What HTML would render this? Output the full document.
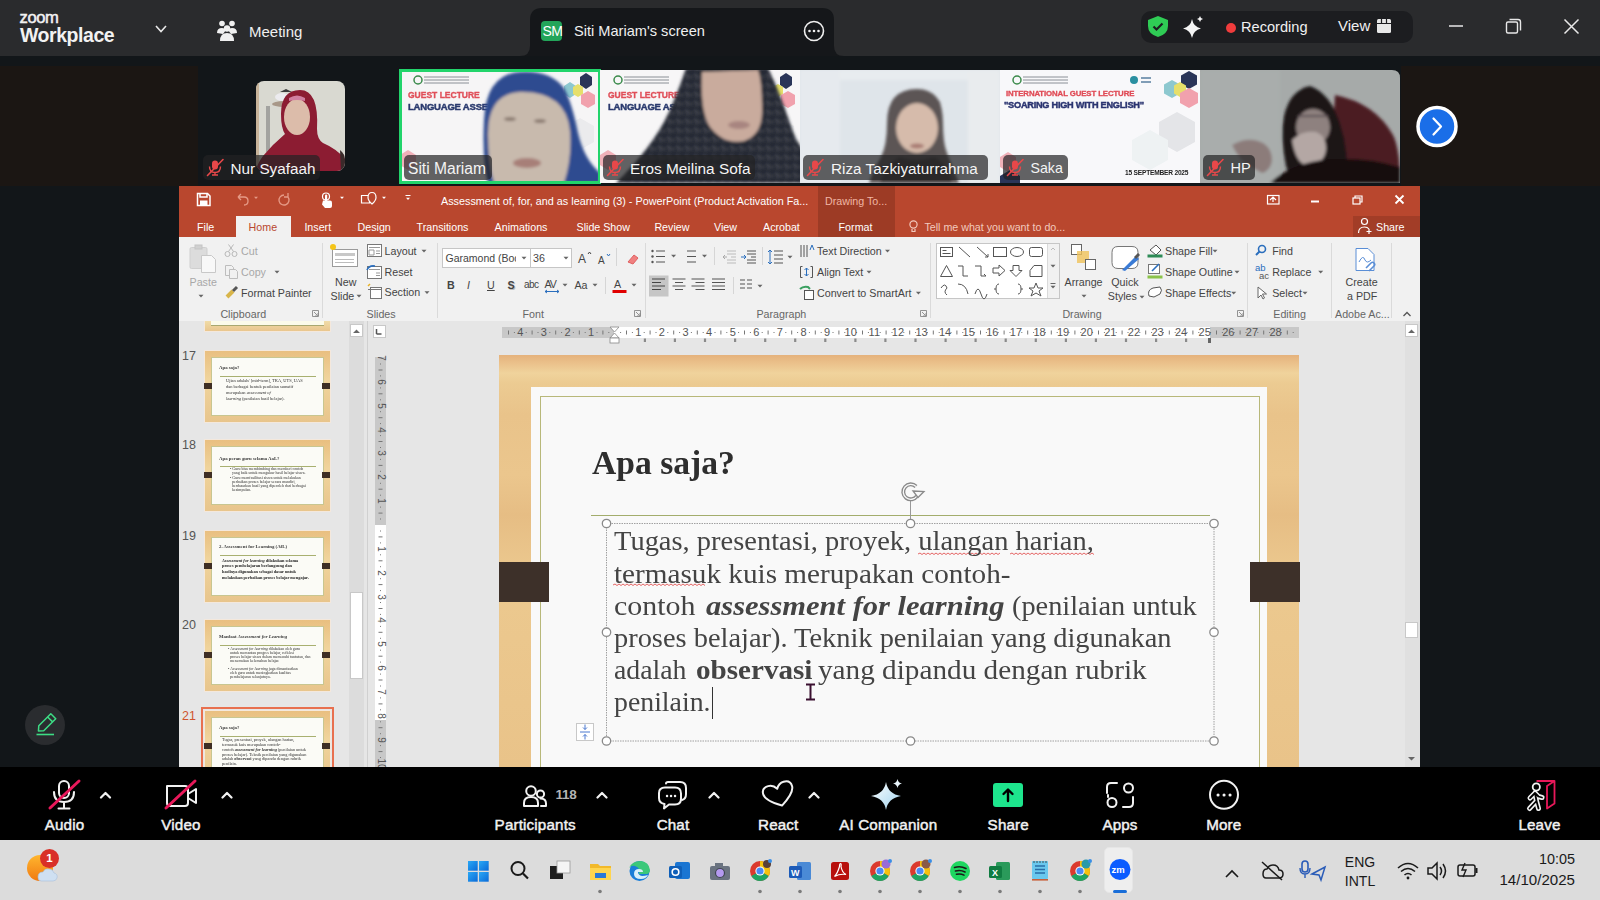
<!DOCTYPE html>
<html><head><meta charset="utf-8">
<style>
*{margin:0;padding:0;box-sizing:border-box}
html,body{width:1600px;height:900px;overflow:hidden;background:#121619;font-family:"Liberation Sans",sans-serif}
.a{position:absolute}
.t{position:absolute;white-space:nowrap;line-height:1}
svg{position:absolute;overflow:visible}
</style></head><body>
<!-- TOP BAR -->
<div class="a" style="left:0;top:0;width:1600px;height:56px;background:#2a2b2d"></div>
<div class="t" style="left:19.5px;top:9.5px;font-size:16.6px;color:#f2f2f2;-webkit-text-stroke:0.5px #f2f2f2;letter-spacing:-0.4px">zoom</div>
<div class="t" style="left:20px;top:26px;font-size:19.5px;font-weight:bold;color:#f2f2f2;letter-spacing:-0.45px">Workplace</div>
<svg style="left:0;top:0" width="1600" height="56">
 <path d="M156 26 L161 31.5 L166 26" fill="none" stroke="#e8e8e8" stroke-width="1.6"/>
 <g fill="#f0f0f0">
  <circle cx="222" cy="23.5" r="2.8"/><circle cx="232" cy="23.5" r="2.8"/>
  <path d="M217 33 q0-5 5-5 q3 0 4 2 l-3 4z M237 33 q0-5 -5-5 q-3 0 -4 2 l3 4z"/>
  <circle cx="227" cy="28.5" r="3.2"/>
  <path d="M220 41 q0-8 7-8 q7 0 7 8z"/>
 </g>
 <path d="M520 56 q10 0 10 -10 V20 q0 -12 12 -12 H822 q12 0 12 12 V46 q0 10 10 10z" fill="#15171a"/>
 <rect x="541" y="21" width="21" height="20" rx="4" fill="#23a55a"/>
 <circle cx="814" cy="31" r="9.5" fill="none" stroke="#f0f0f0" stroke-width="1.6"/>
 <circle cx="809.5" cy="31" r="1.3" fill="#f0f0f0"/><circle cx="814" cy="31" r="1.3" fill="#f0f0f0"/><circle cx="818.5" cy="31" r="1.3" fill="#f0f0f0"/>
 <rect x="1141" y="11" width="272" height="32" rx="10" fill="#1c1d20"/>
 <path d="M1158 16 l10 4 v6 q0 8 -10 11 q-10 -3 -10 -11 v-6z" fill="#2fcc55"/>
 <path d="M1153.5 26.5 l3 3 l6 -6" fill="none" stroke="#1c1d20" stroke-width="2.2"/>
 <path d="M1192 19 q1.5 8 9 9.5 q-7.5 1.5 -9 9.5 q-1.5 -8 -9 -9.5 q7.5 -1.5 9 -9.5z" fill="#f4f4f4"/>
 <path d="M1200 16 q.5 2.5 3 3 q-2.5 .5 -3 3 q-.5 -2.5 -3 -3 q2.5 -.5 3 -3z" fill="#f4f4f4"/>
 <circle cx="1231" cy="28" r="5" fill="#f03c3c"/>
 <rect x="1377" y="19" width="14" height="14" rx="1.5" fill="#e8e8e8"/>
 <path d="M1377 23.5 h14 M1381.5 19 v4.5 M1386.5 19 v4.5" stroke="#1c1d20" stroke-width="1.2"/>
 <path d="M1449 26 h14" stroke="#e8e8e8" stroke-width="1.5"/>
 <rect x="1506.5" y="22" width="11" height="11" rx="1.5" fill="none" stroke="#e8e8e8" stroke-width="1.4"/>
 <path d="M1509.5 19.5 h8.5 q2.5 0 2.5 2.5 v8.5" fill="none" stroke="#e8e8e8" stroke-width="1.4"/>
 <path d="M1564.5 19.5 l14 14 M1578.5 19.5 l-14 14" stroke="#e8e8e8" stroke-width="1.5"/>
</svg>
<div class="t" style="left:249px;top:23.7px;font-size:15px;color:#f0f0f0">Meeting</div>
<div class="t" style="left:542px;top:24px;font-size:14px;color:#fff;width:21px;text-align:center;letter-spacing:-0.5px">SM</div>
<div class="t" style="left:574px;top:23.5px;font-size:14.6px;color:#f0f0f0">Siti Mariam's screen</div>
<div class="t" style="left:1241px;top:20.3px;font-size:14.6px;color:#f0f0f0">Recording</div>
<div class="t" style="left:1338px;top:18px;font-size:15px;color:#f0f0f0">View</div>
<!-- GALLERY -->
<div class="a" style="left:0;top:66px;width:198px;height:120px;background:#1b1613"></div>
<div class="a" style="left:1401px;top:66px;width:199px;height:120px;background:#1b1613"></div>
<svg style="left:0;top:0" width="1600" height="190">
 <defs>
  <filter id="bl1" x="-20%" y="-20%" width="140%" height="140%"><feGaussianBlur stdDeviation="1.6"/></filter>
  <filter id="bl2" x="-20%" y="-20%" width="140%" height="140%"><feGaussianBlur stdDeviation="0.6"/></filter>
  <pattern id="dots" width="9" height="9" patternUnits="userSpaceOnUse"><rect width="9" height="9" fill="#282b36"/><path d="M2 2 l2 3 M6 5 h2 M3 7 l1 -1" stroke="#6e727e" stroke-width="0.9"/></pattern>
  <clipPath id="c1"><rect x="256" y="81" width="89" height="90" rx="8"/></clipPath>
  <clipPath id="c2"><rect x="400" y="70" width="200" height="113"/></clipPath>
  <clipPath id="c3"><rect x="600" y="70" width="200" height="113"/></clipPath>
  <clipPath id="c4"><rect x="800" y="70" width="200" height="113"/></clipPath>
  <clipPath id="c5"><rect x="1000" y="70" width="200" height="113"/></clipPath>
  <clipPath id="c6"><path d="M1200 70 H1392 q8 0 8 8 V183 H1200z"/></clipPath>
 </defs>
 <!-- Nur Syafaah -->
 <g clip-path="url(#c1)">
  <rect x="256" y="81" width="89" height="90" fill="#d9d9d1"/>
  <g filter="url(#bl2)">
   <rect x="256" y="81" width="3" height="90" fill="#c8b49a"/>
   <ellipse cx="284" cy="104" rx="12" ry="3" fill="#a89888"/>
   <rect x="266" y="106" width="4" height="46" fill="#a3a3a0"/>
   <ellipse cx="282" cy="97" rx="7" ry="4" fill="#ecebef"/>
   <path d="M280 92 l6 -3 l6 3z" fill="#3a3a3a"/>
   <path d="M300 90 q-19 0 -19 24 q0 14 4 20 q-12 10 -22 22 q-6 8 -7 15 h89 v-12 q-8 -10 -22 -16 q-6 -4 -6 -14 q2 -39 -17 -39z" fill="#8c1b32"/>
   <path d="M340 150 q5 4 5 10 v11 h-4z" fill="#3a2a2a"/>
   <ellipse cx="297" cy="117" rx="13" ry="18" fill="#dcbcaa"/>
   <path d="M289 98 q8 -5 16 0 v3 q-8 -2 -16 0z" fill="#d07fa0"/>
  </g>
 </g>
 <!-- Siti Mariam -->
 <g clip-path="url(#c2)">
  <rect x="400" y="70" width="200" height="113" fill="#f6f5f6"/>
  <g filter="url(#bl2)">
   <circle cx="418" cy="80" r="4" fill="none" stroke="#3a8a4a" stroke-width="1.5"/>
   <path d="M424 77 h45 M424 80 h45 M424 83 h45" stroke="#8a8f95" stroke-width="1"/>
   <text x="408" y="98" font-family="Liberation Sans" font-weight="bold" font-size="8.5" fill="#e0505a" stroke="#e0505a" stroke-width="0.35">GUEST LECTURE</text>
   <text x="408" y="110" font-family="Liberation Sans" font-weight="bold" font-size="9.5" fill="#2a3a6e" stroke="#2a3a6e" stroke-width="0.45" letter-spacing="-0.2">LANGUAGE ASSES</text>
   <path d="M586 73 l6 4 v8 l-6 4 l-6 -4 v-8z" fill="#2b3458"/>
   <path d="M570 82 l6 4 v8 l-6 4 l-6 -4 v-8z" fill="#8dc8cf"/>
   <path d="M578 84 l5 3 v7 l-5 3 l-5 -3 v-7z" fill="#e6df6a"/>
   <path d="M588 91 l7 4 v9 l-7 4 l-7 -4 v-9z" fill="#f1a1ad"/>
   <path d="M580 118 l14 8 v16 l-14 8 l-14 -8 v-16z" fill="#ebebed"/>
   <path d="M408 150 l8 5 v10 l-8 5 l-8 -5 v-10z" fill="#f0b0b8"/>
  </g>
  <g filter="url(#bl1)">
   <path d="M520 72 q-34 2 -36 48 q-2 40 4 63 h112 v-10 q-16 -14 -22 -40 q-6 -30 -14 -45 q-14 -18 -44 -16z" fill="#2e4c90"/>
   <path d="M520 92 q-32 2 -32 42 q0 30 6 49 h70 q8 -24 6 -52 q-4 -40 -50 -39z" fill="#c8baad"/>
   <ellipse cx="527" cy="163" rx="14" ry="5" fill="#a77f78"/><ellipse cx="510" cy="119" rx="6" ry="2" fill="#8a7a70"/><ellipse cx="540" cy="121" rx="6" ry="2" fill="#8a7a70"/>
  </g>
 </g>
 <rect x="400.5" y="70.5" width="199" height="112" fill="none" stroke="#22d46b" stroke-width="3"/>
 <!-- Eros -->
 <g clip-path="url(#c3)">
  <rect x="600" y="70" width="200" height="113" fill="#f7f6f7"/>
  <g filter="url(#bl2)">
   <circle cx="618" cy="80" r="4" fill="none" stroke="#3a8a4a" stroke-width="1.5"/>
   <path d="M624 77 h45 M624 80 h45 M624 83 h45" stroke="#8a8f95" stroke-width="1"/>
   <text x="608" y="98" font-family="Liberation Sans" font-weight="bold" font-size="8.5" fill="#e0505a" stroke="#e0505a" stroke-width="0.35">GUEST LECTURE</text>
   <text x="608" y="110" font-family="Liberation Sans" font-weight="bold" font-size="9.5" fill="#2a3a6e" stroke="#2a3a6e" stroke-width="0.45" letter-spacing="-0.2">LANGUAGE AS</text>
   <path d="M786 73 l6 4 v8 l-6 4 l-6 -4 v-8z" fill="#2b3458"/>
   <path d="M770 82 l6 4 v8 l-6 4 l-6 -4 v-8z" fill="#8dc8cf"/>
   <path d="M778 84 l5 3 v7 l-5 3 l-5 -3 v-7z" fill="#e6df6a"/>
   <path d="M788 91 l7 4 v9 l-7 4 l-7 -4 v-9z" fill="#f1a1ad"/>
   <path d="M780 118 l14 8 v16 l-14 8 l-14 -8 v-16z" fill="#ebebed"/>
   <path d="M608 150 l8 5 v10 l-8 5 l-8 -5 v-10z" fill="#f0b0b8"/>
  </g>
  <g filter="url(#bl1)">
   <path d="M686 68 q-10 30 -20 50 q-15 30 -50 65 h190 v-30 q-10 -10 -16 -30 q-10 -30 -22 -55z" fill="url(#dots)"/>
   <path d="M702 72 q-2 40 8 55 q14 18 34 14 q18 -6 18 -30 q0 -30 -4 -41z" fill="#c9ab9d"/>
   <ellipse cx="739" cy="125" rx="11" ry="4" fill="#a88580"/>
  </g>
 </g>
 <!-- Riza -->
 <g clip-path="url(#c4)">
  <rect x="800" y="70" width="200" height="113" fill="#dfe5ea"/>
  <g filter="url(#bl1)">
   <rect x="800" y="70" width="40" height="113" fill="#e6eaee"/>
   <rect x="968" y="70" width="32" height="113" fill="#e9ecee"/>
   <rect x="840" y="70" width="128" height="10" fill="#e8ecef"/>
   <path d="M917 89 q-30 0 -30 34 q0 22 -6 34 q-8 14 -12 26 h90 q-6 -14 -12 -30 q-4 -10 -4 -30 q0 -34 -26 -34z" fill="#5c5455"/>
   <ellipse cx="917" cy="128" rx="21" ry="25" fill="#d6bbab"/>
   <path d="M894 112 q10 -16 26 -14 q18 2 22 14 l-2 -10 q-8 -12 -22 -12 q-16 0 -24 12z" fill="#5c5455"/>
   <ellipse cx="917" cy="146" rx="7" ry="2.5" fill="#a87a72"/>
   <path d="M880 183 q6 -20 20 -26 q16 6 34 0 q14 6 18 26z" fill="#3e3838"/>
  </g>
 </g>
 <!-- Saka -->
 <g clip-path="url(#c5)">
  <rect x="1000" y="70" width="200" height="113" fill="#f8f8fa"/>
  <g filter="url(#bl2)">
   <circle cx="1017" cy="80" r="4" fill="none" stroke="#3a8a4a" stroke-width="1.5"/>
   <path d="M1023 77 h45 M1023 80 h45 M1023 83 h45" stroke="#8a8f95" stroke-width="1"/>
   <circle cx="1134" cy="80" r="4" fill="#2a8fa0"/>
   <path d="M1141 78 h10 M1141 82 h10" stroke="#5a80a0" stroke-width="1.5"/>
   <text x="1006" y="96" font-family="Liberation Sans" font-weight="bold" font-size="7.8" fill="#e04a55" stroke="#e04a55" stroke-width="0.3" letter-spacing="-0.1">INTERNATIONAL GUEST LECTURE</text>
   <text x="1004" y="107.5" font-family="Liberation Sans" font-weight="bold" font-size="9.2" fill="#2a3470" stroke="#2a3470" stroke-width="0.45" letter-spacing="-0.25">"SOARING HIGH WITH ENGLISH"</text>
   <text x="1125" y="174.5" font-family="Liberation Sans" font-weight="bold" font-size="6.6" fill="#222" letter-spacing="-0.2">15 SEPTEMBER 2025</text>
   <path d="M1189 71 l8 4.5 v9 l-8 4.5 l-8 -4.5 v-9z" fill="#2b3458"/>
   <path d="M1172 80 l8 4.5 v9 l-8 4.5 l-8 -4.5 v-9z" fill="#8dc8cf"/>
   <path d="M1180 82 l6 3.5 v8 l-6 3.5 l-6 -3.5 v-8z" fill="#e6df6a"/>
   <path d="M1189 88 l9 5 v10 l-9 5 l-9 -5 v-10z" fill="#f1a1ad"/>
   <path d="M1177 112 l18 10 v20 l-18 10 l-18 -10 v-20z" fill="#e4e5e8"/>
   <path d="M1150 130 l18 10 v20 l-18 10 l-18 -10 v-20z" fill="#eef2f3"/>
   <path d="M1008 152 l8 5 v10 l-8 5 l-8 -5 v-10z" fill="#f0b0b8"/>
   <path d="M1010 170 l10 6 v12 l-10 6 l-10 -6 v-12z" fill="#2b3458"/>
  </g>
 </g>
 <!-- HP -->
 <g clip-path="url(#c6)">
  <rect x="1200" y="70" width="200" height="113" fill="#a6aaa9"/>
  <g filter="url(#bl1)">
   <rect x="1200" y="70" width="80" height="113" fill="#a9adac"/>
   <path d="M1335 95 q40 8 58 40 q7 14 7 48 h-70z" fill="#4c1c24"/>
   <path d="M1310 86 q-20 4 -26 30 q-4 20 2 50 q4 14 10 17 h50 q4 -30 -6 -60 q-10 -30 -30 -37z" fill="#1e1416"/>
   <ellipse cx="1313" cy="127" rx="17" ry="18" fill="#8e817f"/>
   <path d="M1292 140 q10 -10 24 -8 q10 4 10 16 q0 14 -16 18 q-14 0 -18 -26z" fill="#b4a7a4"/>
   <path d="M1298 116 h30" stroke="#5a5052" stroke-width="2"/>
   <path d="M1232 145 q14 -8 26 -4 q14 4 14 20 q-2 10 -10 12 l-14 -8 q-8 -4 -16 -20z" fill="#8c7c7a"/>
   <path d="M1270 183 q20 -20 60 -24 q40 -2 70 8 v16z" fill="#180e10"/>
  </g>
 </g>
 <!-- next -->
 <circle cx="1437" cy="126.5" r="19" fill="#1a6ee8" stroke="#fff" stroke-width="3.5"/>
 <path d="M1433.5 118.5 l7.5 8 l-7.5 8" fill="none" stroke="#fff" stroke-width="2.2" stroke-linecap="round" stroke-linejoin="round"/>
 <!-- labels -->
 <g fill="#222224" fill-opacity="0.7">
  <rect x="203" y="155" width="117" height="25" rx="5"/>
  <rect x="404" y="155" width="88" height="25" rx="5"/>
  <rect x="603" y="155" width="152" height="25" rx="5"/>
  <rect x="803" y="155" width="185" height="25" rx="5"/>
  <rect x="1003" y="155" width="65" height="25" rx="5"/>
  <rect x="1203" y="155" width="52" height="25" rx="5"/>
 </g>
<g transform="translate(207,159)"><rect x="5" y="1.5" width="6" height="9" rx="3" fill="#e8484a"/><path d="M2.5 7.5 q0 6 5.5 6 q5.5 0 5.5 -6 M8 13.5 v2.5 M5 16 h6" fill="none" stroke="#e8484a" stroke-width="1.4"/><path d="M0.5 16.5 L16 0.5" stroke="#e8484a" stroke-width="1.6" stroke-linecap="round"/></g><g transform="translate(607,159)"><rect x="5" y="1.5" width="6" height="9" rx="3" fill="#e8484a"/><path d="M2.5 7.5 q0 6 5.5 6 q5.5 0 5.5 -6 M8 13.5 v2.5 M5 16 h6" fill="none" stroke="#e8484a" stroke-width="1.4"/><path d="M0.5 16.5 L16 0.5" stroke="#e8484a" stroke-width="1.6" stroke-linecap="round"/></g><g transform="translate(807,159)"><rect x="5" y="1.5" width="6" height="9" rx="3" fill="#e8484a"/><path d="M2.5 7.5 q0 6 5.5 6 q5.5 0 5.5 -6 M8 13.5 v2.5 M5 16 h6" fill="none" stroke="#e8484a" stroke-width="1.4"/><path d="M0.5 16.5 L16 0.5" stroke="#e8484a" stroke-width="1.6" stroke-linecap="round"/></g><g transform="translate(1007,159)"><rect x="5" y="1.5" width="6" height="9" rx="3" fill="#e8484a"/><path d="M2.5 7.5 q0 6 5.5 6 q5.5 0 5.5 -6 M8 13.5 v2.5 M5 16 h6" fill="none" stroke="#e8484a" stroke-width="1.4"/><path d="M0.5 16.5 L16 0.5" stroke="#e8484a" stroke-width="1.6" stroke-linecap="round"/></g><g transform="translate(1207,159)"><rect x="5" y="1.5" width="6" height="9" rx="3" fill="#e8484a"/><path d="M2.5 7.5 q0 6 5.5 6 q5.5 0 5.5 -6 M8 13.5 v2.5 M5 16 h6" fill="none" stroke="#e8484a" stroke-width="1.4"/><path d="M0.5 16.5 L16 0.5" stroke="#e8484a" stroke-width="1.6" stroke-linecap="round"/></g>
</svg>
<div class="t" style="left:230.5px;top:160.5px;font-size:15.3px;color:#f4f4f4">Nur Syafaah</div>
<div class="t" style="left:408px;top:160.5px;font-size:15.6px;color:#f4f4f4">Siti Mariam</div>
<div class="t" style="left:630px;top:160.5px;font-size:15.4px;color:#f4f4f4">Eros Meilina Sofa</div>
<div class="t" style="left:831px;top:160.5px;font-size:15.3px;color:#f4f4f4">Riza Tazkiyaturrahma</div>
<div class="t" style="left:1030.5px;top:160.5px;font-size:14.2px;color:#f4f4f4">Saka</div>
<div class="t" style="left:1230.5px;top:160.5px;font-size:14.6px;color:#f4f4f4">HP</div>
<!-- POWERPOINT -->
<div class="a" style="left:179px;top:186px;width:1241px;height:51px;background:#b9472e"></div>
<div class="a" style="left:818px;top:186px;width:77px;height:51px;background:#9d3b25"></div>
<div class="a" style="left:1353px;top:216px;width:67px;height:21px;background:#a23d27"></div>
<div class="a" style="left:236px;top:216px;width:55px;height:22px;background:#f1f1f1"></div>
<div class="a" style="left:179px;top:237px;width:1241px;height:84px;background:#f1f1f1"></div>
<div class="a" style="left:179px;top:321px;width:1241px;height:446px;background:#e6e6e6"></div>
<div class="t" style="left:441px;top:195.79px;font-size:10.8px;color:#fff;font-weight:normal;">Assessment of, for, and as learning (3) - PowerPoint (Product Activation Fa...</div>

<div class="t" style="left:825px;top:195.84px;font-size:10.7px;color:#f0b6a4;font-weight:normal;">Drawing To...</div>

<div class="t" style="left:197px;top:221.84px;font-size:10.7px;color:#fff;font-weight:normal;">File</div>

<div class="t" style="left:304.4px;top:221.84px;font-size:10.7px;color:#fff;font-weight:normal;">Insert</div>

<div class="t" style="left:357.5px;top:221.84px;font-size:10.7px;color:#fff;font-weight:normal;">Design</div>

<div class="t" style="left:416.6px;top:221.84px;font-size:10.7px;color:#fff;font-weight:normal;">Transitions</div>

<div class="t" style="left:494.6px;top:221.84px;font-size:10.7px;color:#fff;font-weight:normal;">Animations</div>

<div class="t" style="left:576.5px;top:221.84px;font-size:10.7px;color:#fff;font-weight:normal;">Slide Show</div>

<div class="t" style="left:654.4px;top:221.84px;font-size:10.7px;color:#fff;font-weight:normal;">Review</div>

<div class="t" style="left:714px;top:221.84px;font-size:10.7px;color:#fff;font-weight:normal;">View</div>

<div class="t" style="left:763px;top:221.84px;font-size:10.7px;color:#fff;font-weight:normal;">Acrobat</div>

<div class="t" style="left:838.6px;top:221.84px;font-size:10.7px;color:#fff;font-weight:normal;">Format</div>

<div class="t" style="left:248.6px;top:221.84px;font-size:10.7px;color:#b9472e;font-weight:normal;">Home</div>

<div class="t" style="left:924.4px;top:221.84px;font-size:10.7px;color:#f2c9bd;font-weight:normal;">Tell me what you want to do...</div>

<div class="t" style="left:1376px;top:221.84px;font-size:10.7px;color:#fff;font-weight:normal;">Share</div>

<svg style="left:0;top:0" width="1600" height="900">
 <g fill="none" stroke="#fff" stroke-width="1.3">
  <path d="M197.5 193.5 h10 l2.5 2.5 v9.5 h-12.5z" stroke-width="1.5"/><path d="M200 193.5 v3.5 h7 v-3.5" stroke-width="1.5"/><rect x="200" y="200.5" width="7.5" height="5" fill="#fff" stroke="none"/>
 </g>
 <g fill="none" stroke="#e59a86" stroke-width="1.3">
  <path d="M238 197 l3 -3 M238 197 l3 3 M238 197 h6 q4 0 4 4 q0 4 -4 4"/>
  <path d="M284 195 a5 5 0 1 0 4 2 M288 193 v4 h-4"/>
 </g>
<path d="M254.0 196.8 h4 l-2.0 2.3z" fill="#e59a86"/>
 <g fill="none" stroke="#fff" stroke-width="1.2"><circle cx="326" cy="196.5" r="3.5"/></g><g fill="#fff"><rect x="325" y="194.5" width="2.2" height="9" rx="1"/><path d="M323 200.5 h7 q2 0 2 2 v3.5 q0 2 -2 2 h-5 l-3 -3.5z"/></g>
<path d="M340.0 196.8 h4 l-2.0 2.3z" fill="#fff"/>
 <g fill="none" stroke="#fff" stroke-width="1.2"><path d="M361.5 195.5 h8 v7.5 h-8z"/><path d="M372 192.5 q4 0 4 5 q0 3 -4 6.5 q-4 -3.5 -4 -6.5 q0 -5 4 -5z" fill="#b9472e"/></g>
<path d="M382.0 196.8 h4 l-2.0 2.3z" fill="#fff"/><path d="M405.5 195.5 h5" stroke="#fff" stroke-width="1"/><path d="M406.0 197.8 h4 l-2.0 2.3z" fill="#fff"/>
 <g fill="none" stroke="#fff" stroke-width="1.2">
  <rect x="1267.5" y="195.5" width="11.5" height="8.5"/><path d="M1270 200 l3 -3 l3 3 M1273 197 v5"/>
  <path d="M1311 201.5 h8" stroke-width="2"/>
  <rect x="1353" y="198" width="7" height="6"/><path d="M1355 198 v-2 h7 v6 h-2"/>
  <path d="M1395.5 195.5 l8 8 M1403.5 195.5 l-8 8" stroke-width="1.8"/>
  <circle cx="913.5" cy="224.5" r="3.6" stroke="#f2c9bd"/><path d="M912 229 v2.5 h3 v-2.5" stroke="#f2c9bd"/>
  <circle cx="1364.5" cy="221.5" r="3"/><path d="M1358.5 233 q0 -6 6 -6 q3 0 4.5 2 M1369 229 v5 M1366.5 231.5 h5"/>
 </g>
</svg><div class="t" style="left:189.5px;top:276.84px;font-size:10.7px;color:#a8a8a8;font-weight:normal;">Paste</div>

<div class="t" style="left:241px;top:245.84px;font-size:10.7px;color:#a8a8a8;font-weight:normal;">Cut</div>

<div class="t" style="left:241px;top:266.84px;font-size:10.7px;color:#a8a8a8;font-weight:normal;">Copy</div>

<div class="t" style="left:241px;top:287.64px;font-size:10.7px;color:#444;font-weight:normal;">Format Painter</div>

<div class="t" style="left:220.4px;top:308.84px;font-size:10.7px;color:#666;font-weight:normal;">Clipboard</div>

<div class="t" style="left:335px;top:276.84px;font-size:10.7px;color:#444;font-weight:normal;">New</div>

<div class="t" style="left:330.5px;top:290.84px;font-size:10.7px;color:#444;font-weight:normal;">Slide</div>

<div class="t" style="left:384.5px;top:245.84px;font-size:10.7px;color:#444;font-weight:normal;">Layout</div>

<div class="t" style="left:384.5px;top:266.84px;font-size:10.7px;color:#444;font-weight:normal;">Reset</div>

<div class="t" style="left:384.5px;top:287.34px;font-size:10.7px;color:#444;font-weight:normal;">Section</div>

<div class="t" style="left:366.5px;top:308.84px;font-size:10.7px;color:#666;font-weight:normal;">Slides</div>

<div class="a" style="left:442px;top:248px;width:89px;height:20px;background:#fff;border:1px solid #c6c6c6"></div>
<div class="a" style="left:530px;top:248px;width:42px;height:20px;background:#fff;border:1px solid #c6c6c6"></div>
<div class="t" style="left:445.5px;top:252.94px;font-size:10.5px;color:#444;font-weight:normal;">Garamond (Boc</div>

<div class="a" style="left:516px;top:249px;width:8px;height:18px;background:#fff"></div>
<div class="t" style="left:533px;top:252.84px;font-size:10.7px;color:#444;font-weight:normal;">36</div>

<div class="t" style="left:522.5px;top:308.84px;font-size:10.7px;color:#666;font-weight:normal;">Font</div>

<div class="t" style="left:447px;top:279.84px;font-size:10.7px;color:#444;font-weight:bold;">B</div>

<div class="t" style="left:467px;top:279.84px;font-size:10.7px;color:#444;font-weight:normal;font-style:italic;font-family:"Liberation Serif",serif;font-size:12px">I</div>

<div class="t" style="left:487px;top:279.84px;font-size:10.7px;color:#444;font-weight:normal;text-decoration:underline">U</div>

<div class="t" style="left:507.5px;top:279.84px;font-size:10.7px;color:#444;font-weight:bold;text-shadow:1px 1px 0 #bbb">S</div>

<div class="t" style="left:524px;top:280.18px;font-size:10px;color:#444;font-weight:normal;letter-spacing:-0.5px">abc</div>

<div class="t" style="left:544.4px;top:278.84px;font-size:10.7px;color:#444;font-weight:normal;letter-spacing:-1px">AV</div>

<div class="t" style="left:574.4px;top:279.84px;font-size:10.7px;color:#444;font-weight:normal;">Aa</div>

<div class="t" style="left:578px;top:253.22px;font-size:12px;color:#444;font-weight:normal;">A</div>

<div class="t" style="left:598px;top:256.18px;font-size:10px;color:#444;font-weight:normal;">A</div>

<div class="t" style="left:614px;top:278.84px;font-size:10.7px;color:#444;font-weight:normal;">A</div>

<div class="t" style="left:817px;top:245.84px;font-size:10.7px;color:#444;font-weight:normal;">Text Direction</div>

<div class="t" style="left:817px;top:266.84px;font-size:10.7px;color:#444;font-weight:normal;">Align Text</div>

<div class="t" style="left:817px;top:287.84px;font-size:10.7px;color:#444;font-weight:normal;">Convert to SmartArt</div>

<div class="t" style="left:756.4px;top:308.84px;font-size:10.7px;color:#666;font-weight:normal;">Paragraph</div>

<div class="a" style="left:936px;top:243px;width:124px;height:56px;background:#fff;border:1px solid #c6c6c6"></div>
<div class="a" style="left:1047px;top:244px;width:12px;height:54px;background:#f1f1f1;border-left:1px solid #dadada"></div>
<div class="t" style="left:1064.5px;top:276.84px;font-size:10.7px;color:#444;font-weight:normal;">Arrange</div>

<div class="t" style="left:1111.3px;top:276.84px;font-size:10.7px;color:#444;font-weight:normal;">Quick</div>

<div class="t" style="left:1107.8px;top:291.34px;font-size:10.7px;color:#444;font-weight:normal;">Styles</div>

<div class="t" style="left:1165px;top:246.04px;font-size:10.7px;color:#444;font-weight:normal;">Shape Fill</div>

<div class="t" style="left:1165px;top:266.84px;font-size:10.7px;color:#444;font-weight:normal;">Shape Outline</div>

<div class="t" style="left:1165px;top:287.84px;font-size:10.7px;color:#444;font-weight:normal;">Shape Effects</div>

<div class="t" style="left:1062.4px;top:308.84px;font-size:10.7px;color:#666;font-weight:normal;">Drawing</div>

<div class="t" style="left:1272.2px;top:245.84px;font-size:10.7px;color:#444;font-weight:normal;">Find</div>

<div class="t" style="left:1272.2px;top:266.84px;font-size:10.7px;color:#444;font-weight:normal;">Replace</div>

<div class="t" style="left:1272.2px;top:287.84px;font-size:10.7px;color:#444;font-weight:normal;">Select</div>

<div class="t" style="left:1273.3px;top:309.34px;font-size:10.7px;color:#666;font-weight:normal;">Editing</div>

<div class="t" style="left:1345.5px;top:276.84px;font-size:10.7px;color:#444;font-weight:normal;">Create</div>

<div class="t" style="left:1347px;top:291.34px;font-size:10.7px;color:#444;font-weight:normal;">a PDF</div>

<div class="t" style="left:1335px;top:309.34px;font-size:10.7px;color:#666;font-weight:normal;">Adobe Ac...</div>
<svg style="left:0;top:0" width="1600" height="900"><path d="M322.5 243 V318" stroke="#dadada"/><path d="M437.5 243 V318" stroke="#dadada"/><path d="M645.5 243 V318" stroke="#dadada"/><path d="M930.5 243 V318" stroke="#dadada"/><path d="M1247.5 243 V318" stroke="#dadada"/><path d="M1331.5 243 V318" stroke="#dadada"/><path d="M1391.5 243 V318" stroke="#dadada"/><path d="M714.5 247 V265" stroke="#d6d6d6"/><path d="M762.5 247 V265" stroke="#d6d6d6"/><path d="M605.5 277 V294" stroke="#d6d6d6"/><path d="M733.5 277 V294" stroke="#d6d6d6"/><path d="M616.5 248 V266" stroke="#d6d6d6"/><path d="M198.5 294.8 h5 l-2.5 2.8z" fill="#666"/><path d="M274.5 270.8 h5 l-2.5 2.8z" fill="#666"/><path d="M421.5 249.8 h5 l-2.5 2.8z" fill="#666"/><path d="M356.5 294.8 h5 l-2.5 2.8z" fill="#666"/><path d="M424.5 291.3 h5 l-2.5 2.8z" fill="#666"/><path d="M521.5 256.8 h5 l-2.5 2.8z" fill="#666"/><path d="M563.5 256.8 h5 l-2.5 2.8z" fill="#666"/><path d="M562.5 283.8 h5 l-2.5 2.8z" fill="#666"/><path d="M592.5 283.8 h5 l-2.5 2.8z" fill="#666"/><path d="M631.5 283.8 h5 l-2.5 2.8z" fill="#666"/><path d="M671.1 254.8 h5 l-2.5 2.8z" fill="#666"/><path d="M702.0 254.8 h5 l-2.5 2.8z" fill="#666"/><path d="M787.5 255.8 h5 l-2.5 2.8z" fill="#666"/><path d="M757.5 284.8 h5 l-2.5 2.8z" fill="#666"/><path d="M885.0 249.8 h5 l-2.5 2.8z" fill="#666"/><path d="M866.5 270.8 h5 l-2.5 2.8z" fill="#666"/><path d="M915.9 291.8 h5 l-2.5 2.8z" fill="#666"/><path d="M1081.5 294.8 h5 l-2.5 2.8z" fill="#666"/><path d="M1139.5 295.8 h5 l-2.5 2.8z" fill="#666"/><path d="M1212.5 249.8 h5 l-2.5 2.8z" fill="#666"/><path d="M1234.5 270.8 h5 l-2.5 2.8z" fill="#666"/><path d="M1231.2 291.8 h5 l-2.5 2.8z" fill="#666"/><path d="M1318.2 270.8 h5 l-2.5 2.8z" fill="#666"/><path d="M1302.5 291.8 h5 l-2.5 2.8z" fill="#666"/>
 <g fill="none" stroke-width="1">
  <!-- paste -->
  <rect x="190" y="247.5" width="17" height="21" rx="1.5" fill="#dcdcdc" stroke="#cfcfcf"/>
  <rect x="195" y="245" width="7" height="4" fill="#d0d0d0" stroke="#c4c4c4"/>
  <path d="M201.5 255.5 h10 l4 4 v13 h-14z" fill="#f8f8f8" stroke="#c8c8c8"/>
  <!-- cut -->
  <g stroke="#b8b8b8"><circle cx="227.5" cy="254" r="2.5"/><circle cx="234.5" cy="254" r="2.5"/><path d="M228.5 251.5 l5 -7 M233.5 251.5 l-5 -7"/></g>
  <!-- copy -->
  <g stroke="#bdbdbd"><path d="M225.5 265.5 h6 l2 2 v8 h-8z"/><path d="M229.5 269.5 h6 l2 2 v7 h-8z" fill="#f1f1f1"/></g>
  <!-- format painter -->
  <path d="M227 297 l6 -6" stroke="#d8b54a" stroke-width="4"/><path d="M233 291 l4 -4" stroke="#555" stroke-width="3"/>
  <!-- new slide -->
  <rect x="332.5" y="249.5" width="25" height="17" fill="#fff" stroke="#9a9a9a"/>
  <rect x="335" y="253" width="20" height="3" fill="#c8c8c8"/><path d="M335 259.5 h19 M335 262.5 h19" stroke="#bcbcbc"/>
  <circle cx="333" cy="247" r="3" fill="#f5c518"/>
  <!-- layout -->
  <rect x="367.5" y="244.5" width="14" height="12" fill="#fff" stroke="#777"/><path d="M369 247.5 h11 M369 250 h5 v5 h-5z M376 251 h4 M376 253.5 h4" stroke="#999"/>
  <!-- reset -->
  <rect x="367.5" y="266.5" width="14" height="12" fill="#fff" stroke="#777"/><path d="M369 269.5 h11 M376 273 h4 M376 275.5 h4" stroke="#999"/>
  <path d="M367 270 q2 -5 8 -4" stroke="#2a6ebd" stroke-width="1.6"/>
  <!-- section -->
  <rect x="370.5" y="287.5" width="11" height="11" fill="#fff" stroke="#777"/><path d="M368 289.5 h14" stroke="#777"/><path d="M368 286 l2 -2" stroke="#e8b020" stroke-width="1.5"/>
  <!-- grow/shrink carets -->
  <path d="M588 254 l1.5 -2 l1.5 2" stroke="#444"/><path d="M607 254 l1.5 2 l1.5 -2" stroke="#2a6ebd"/>
  <!-- clear formatting -->
  <path d="M628 262 l6 -7 l4 3 l-5 6z" fill="#f08080" stroke="#e06060"/>
  <!-- font color underline -->
  <rect x="612.5" y="290" width="14" height="3" fill="#e00000" stroke="none"/>
  <!-- AV arrow -->
  <path d="M545 291.5 h14 M545 291.5 l2 -1.5 M545 291.5 l2 1.5 M559 291.5 l-2 -1.5 M559 291.5 l-2 1.5" stroke="#2a6ebd"/>
 </g>

 <g stroke="#555" stroke-width="1.2">
  <path d="M656 251 h9 M656 256.5 h9 M656 262 h9"/>
  <path d="M687 251 h9 M687 256.5 h9 M687 262 h9"/>
  <path d="M727 251 h9 M727 254 h9 M731 257 h5 M727 260 h9 M727 263 h9" stroke="#bbb"/>
  <path d="M747 251 h9 M747 254 h9 M751 257 h5 M747 260 h9 M747 263 h9"/>
  <path d="M774 251 h9 M774 255 h9 M774 259 h9 M774 263 h9"/>
  <path d="M652 279 h13 M652 282.5 h9 M652 286 h13 M652 289.5 h9"/>
  <path d="M672.5 279 h13 M675 282.5 h8 M672.5 286 h13 M675 289.5 h8"/>
  <path d="M691.5 279 h13 M695.5 282.5 h9 M691.5 286 h13 M695.5 289.5 h9"/>
  <path d="M712 279 h13 M712 282.5 h13 M712 286 h13 M712 289.5 h13"/>
  <path d="M740 280 h5 M747 280 h5 M740 284 h5 M747 284 h5 M740 288 h5 M747 288 h5"/>
 </g>
 <g fill="#555"><circle cx="652.5" cy="251" r="1.2"/><circle cx="652.5" cy="256.5" r="1.2"/><circle cx="652.5" cy="262" r="1.2"/></g>
 <path d="M723 257 h4 M723 257 l2 -2 M723 257 l2 2" stroke="#aaa"/>
 <path d="M741 257 h5 M746 257 l-2 -2 M746 257 l-2 2" stroke="#2a6ebd"/>
 <path d="M770 250 v14 M768 252 l2 -2 l2 2 M768 262 l2 2 l2 -2" stroke="#2a6ebd" fill="none"/>
 <g stroke="#555" fill="none">
  <path d="M801 245 v12 M804 245 v12 M807 245 v12"/><path d="M810 250 l2 -5 l2 5" stroke="#2a6ebd"/>
  <path d="M800.5 266.5 h2 M800.5 266.5 v11 h2 M812.5 266.5 h-2 M812.5 266.5 v11 h-2"/><path d="M806.5 268 v8 M804.5 270 l2 -2 l2 2 M804.5 274 l2 2 l2 -2" stroke="#2a6ebd"/>
  <rect x="804.5" y="290.5" width="9" height="9" fill="#fff"/><path d="M800 289 q3 -3 8 -2 l2 2" stroke="#3aa060" stroke-width="2"/>
 </g>
<rect x="649" y="275.5" width="19.5" height="21" fill="#c6c6c6"/><g stroke="#444" stroke-width="1.2"><path d="M652 279 h13 M652 282.5 h9 M652 286 h13 M652 289.5 h9"/></g>
 <g stroke="#555" fill="none" stroke-width="1">
  <rect x="940.5" y="247.5" width="12" height="9"/><path d="M942.5 250.5 h4 M942.5 253.5 h8"/>
  <path d="M959 247 l11 10"/><path d="M977 247 l11 10 M988 257 v-3 M988 257 h-3"/>
  <rect x="993.5" y="247.5" width="13" height="9"/><ellipse cx="1017" cy="252" rx="6.5" ry="4.5"/><rect x="1029.5" y="247.5" width="13" height="9" rx="2"/>
  <path d="M940.5 276.5 l6 -11 l6 11z"/><path d="M958 266 h5 v10 h5"/><path d="M975 266 h6 v10 h5 M986 276 l-2 -2"/>
  <path d="M993 268 h6 v-3 l6 5.5 l-6 5.5 v-3 h-6z"/><path d="M1013 265.5 h6 v5 h3 l-6 6 l-6 -6 h3z"/><path d="M1030 276.5 v-6 l4 -5 h8 v11z"/>
  <path d="M941 288 q4 -6 6 0 q-4 4 0 7"/><path d="M958 284 q8 0 10 10"/><path d="M975 294 q3 -10 6 0 q3 10 6 0"/>
  <path d="M999 284 q-3 0 -3 5 q0 5 3 5 M996 289 h-2"/><path d="M1018 284 q3 0 3 5 q0 5 -3 5 M1021 289 h2"/>
  <path d="M1036 283 l2 5 h5 l-4 3 l2 5 l-5 -3 l-5 3 l2 -5 l-4 -3 h5z"/>
 </g>
<path d="M312.5 310.5 h6 v6 M312.5 310.5 v6 h6 M314 312 l3.5 3.5 M318 313 v3 h-3" stroke="#888" stroke-width="0.9" fill="none"/><path d="M634.5 310.5 h6 v6 M634.5 310.5 v6 h6 M636 312 l3.5 3.5 M640 313 v3 h-3" stroke="#888" stroke-width="0.9" fill="none"/><path d="M920.5 310.5 h6 v6 M920.5 310.5 v6 h6 M922 312 l3.5 3.5 M926 313 v3 h-3" stroke="#888" stroke-width="0.9" fill="none"/><path d="M1237.5 310.5 h6 v6 M1237.5 310.5 v6 h6 M1239 312 l3.5 3.5 M1243 313 v3 h-3" stroke="#888" stroke-width="0.9" fill="none"/><path d="M1050.5 264.8 h5 l-2.5 2.8z" fill="#666"/><path d="M1050.5 285.8 h5 l-2.5 2.8z" fill="#666"/><path d="M1050.5 283.5 h5" stroke="#666"/><path d="M1051 250 l2 -2 l2 2" stroke="#bbb" fill="none"/>
 <g stroke-width="1">
  <rect x="1071.5" y="244.5" width="10" height="10" fill="#fff" stroke="#666"/>
  <rect x="1077" y="251" width="12" height="12" fill="#f0c35a" stroke="none" opacity="0.8"/>
  <rect x="1085.5" y="259.5" width="10" height="10" fill="#fff" stroke="#666"/>
  <path d="M1118 246.5 h14 q6 0 6 6 v10 q0 6 -6 6 h-14 q-6 0 -6 -6 v-10 q0 -6 6 -6z" fill="#fff" stroke="#777"/>
  <path d="M1122 270 l14 -14 l3 3 l-14 12z" fill="#3a7bd5"/><path d="M1134 257 l4 -4 l2 2 l-4 4z" fill="#555"/>
  <path d="M1150 250 l6 -5 l5 5 l-5 5z" fill="#fff" stroke="#555"/><rect x="1147.5" y="254.5" width="15" height="3" fill="#2e8b57"/>
  <rect x="1148.5" y="264.5" width="11" height="9" fill="#fff" stroke="#777"/><path d="M1152 271 l7 -7" stroke="#2a6ebd" stroke-width="1.6"/><rect x="1147.5" y="275.5" width="15" height="3" fill="#8bc34a"/>
  <path d="M1149 296 q-2 -6 4 -8 l7 -1 q3 3 0 7 l-6 3z" fill="#fff" stroke="#555"/>
  <circle cx="1262" cy="249" r="3.5" fill="none" stroke="#2a6ebd" stroke-width="1.6"/><path d="M1259.5 251.5 l-3.5 3.5" stroke="#2a6ebd" stroke-width="2"/>
  <path d="M1258 287 v11 l3 -3 l2 4 l1.5 -1 l-2 -4 h4z" fill="#fff" stroke="#666"/>
  <path d="M1356 248.5 h12 l6 6 v16 h-18z" fill="#fff" stroke="#5a8ed6"/><path d="M1359 262 q4 -8 6 -2 q2 4 6 0" stroke="#5a8ed6" fill="none"/>
  <path d="M1366 268 l5 -5 a2 2 0 0 1 3 3 l-5 5" stroke="#5a8ed6" fill="none" stroke-width="1.6"/>
  <path d="M1403.5 316 l3.5 -3.5 l3.5 3.5" stroke="#555" fill="none" stroke-width="1.3"/>
 </g>
</svg><div class="t" style="left:1255px;top:263.42px;font-size:9.5px;color:#2a6ebd;font-weight:normal;">ab</div>
<div class="t" style="left:1259px;top:271.42px;font-size:9.5px;color:#555;font-weight:normal;">ac</div>
<div class="a" style="left:349px;top:321px;width:15px;height:446px;background:#dcdcdc"></div>
<div class="a" style="left:350px;top:324px;width:13px;height:13px;background:#fff;border:1px solid #c8c8c8"></div>
<div class="a" style="left:350px;top:592px;width:13px;height:87px;background:#fff;border:1px solid #c8c8c8"></div>
<div class="a" style="left:367px;top:321px;width:1px;height:446px;background:#d0d0d0"></div>
<div class="a" style="left:373px;top:325px;width:13px;height:13px;background:#fff;border:1px solid #c8c8c8"></div>
<div class="a" style="left:1405px;top:321px;width:15px;height:446px;background:#e0e0e0"></div>
<div class="a" style="left:1405px;top:324px;width:13px;height:13px;background:#fff;border:1px solid #c8c8c8"></div>
<div class="a" style="left:1405px;top:622px;width:13px;height:16px;background:#fff;border:1px solid #c8c8c8"></div>
<div class="a" style="left:502px;top:327px;width:797px;height:11px;background:#c8c8c8"></div>
<div class="a" style="left:614px;top:327px;width:596px;height:11px;background:#fff"></div>
<div class="a" style="left:375px;top:357px;width:11px;height:410px;background:#c8c8c8"></div>
<div class="a" style="left:375px;top:525px;width:11px;height:195px;background:#fff"></div>
<svg style="left:0;top:0" width="1600" height="900"><path d="M376.5 334 v-5 M376.5 334 h5" stroke="#555" stroke-width="1.5" fill="none"/><path d="M353 333 l3.5 -3.5 l3.5 3.5z M1408 333 l3.5 -3.5 l3.5 3.5z M1408 757 l3.5 3.5 l3.5 -3.5z" fill="#666"/><path d="M508.5 330.5 v4 M514.4 332.0 v1 M532.1 330.5 v4 M526.2 332.0 v1 M538.0 332.0 v1 M555.7 330.5 v4 M549.8 332.0 v1 M561.6 332.0 v1 M579.3 330.5 v4 M573.4 332.0 v1 M585.2 332.0 v1 M602.9 330.5 v4 M597.0 332.0 v1 M608.8 332.0 v1 M626.5 330.5 v4 M620.6 332.0 v1 M632.4 332.0 v1 M650.1 330.5 v4 M644.2 332.0 v1 M656.0 332.0 v1 M673.7 330.5 v4 M667.8 332.0 v1 M679.6 332.0 v1 M697.3 330.5 v4 M691.4 332.0 v1 M703.2 332.0 v1 M720.9 330.5 v4 M715.0 332.0 v1 M726.8 332.0 v1 M744.5 330.5 v4 M738.6 332.0 v1 M750.4 332.0 v1 M768.1 330.5 v4 M762.2 332.0 v1 M774.0 332.0 v1 M791.7 330.5 v4 M785.8 332.0 v1 M797.6 332.0 v1 M815.3 330.5 v4 M809.4 332.0 v1 M821.2 332.0 v1 M838.9 330.5 v4 M833.0 332.0 v1 M844.8 332.0 v1 M862.5 330.5 v4 M856.6 332.0 v1 M868.4 332.0 v1 M886.1 330.5 v4 M880.2 332.0 v1 M892.0 332.0 v1 M909.7 330.5 v4 M903.8 332.0 v1 M915.6 332.0 v1 M933.3 330.5 v4 M927.4 332.0 v1 M939.2 332.0 v1 M956.9 330.5 v4 M951.0 332.0 v1 M962.8 332.0 v1 M980.5 330.5 v4 M974.6 332.0 v1 M986.4 332.0 v1 M1004.1 330.5 v4 M998.2 332.0 v1 M1010.0 332.0 v1 M1027.7 330.5 v4 M1021.8 332.0 v1 M1033.6 332.0 v1 M1051.3 330.5 v4 M1045.4 332.0 v1 M1057.2 332.0 v1 M1074.9 330.5 v4 M1069.0 332.0 v1 M1080.8 332.0 v1 M1098.5 330.5 v4 M1092.6 332.0 v1 M1104.4 332.0 v1 M1122.1 330.5 v4 M1116.2 332.0 v1 M1128.0 332.0 v1 M1145.7 330.5 v4 M1139.8 332.0 v1 M1151.6 332.0 v1 M1169.3 330.5 v4 M1163.4 332.0 v1 M1175.2 332.0 v1 M1192.9 330.5 v4 M1187.0 332.0 v1 M1198.8 332.0 v1 M1216.5 330.5 v4 M1210.6 332.0 v1 M1222.4 332.0 v1 M1240.1 330.5 v4 M1234.2 332.0 v1 M1246.0 332.0 v1 M1263.7 330.5 v4 M1257.8 332.0 v1 M1269.6 332.0 v1 M1287.3 330.5 v4 M1281.4 332.0 v1 M1293.2 332.0 v1" stroke="#777" stroke-width="1"/><path d="M610 327 h9 l-4.5 5z M610 338 h9 l-4.5 -5z" fill="#fff" stroke="#888" stroke-width="0.8"/><rect x="610" y="338" width="9" height="5" fill="#fff" stroke="#888" stroke-width="0.8"/><rect x="1208" y="338" width="3" height="5" fill="#666"/><rect x="643.8" y="338.5" width="2.2" height="3.5" fill="#8a8a8a"/><rect x="673.8" y="338.5" width="2.2" height="3.5" fill="#8a8a8a"/><rect x="703.9" y="338.5" width="2.2" height="3.5" fill="#8a8a8a"/><rect x="734.0" y="338.5" width="2.2" height="3.5" fill="#8a8a8a"/><rect x="764.1" y="338.5" width="2.2" height="3.5" fill="#8a8a8a"/><rect x="794.1" y="338.5" width="2.2" height="3.5" fill="#8a8a8a"/><rect x="824.2" y="338.5" width="2.2" height="3.5" fill="#8a8a8a"/><rect x="854.3" y="338.5" width="2.2" height="3.5" fill="#8a8a8a"/><rect x="884.3" y="338.5" width="2.2" height="3.5" fill="#8a8a8a"/><rect x="914.4" y="338.5" width="2.2" height="3.5" fill="#8a8a8a"/><rect x="944.5" y="338.5" width="2.2" height="3.5" fill="#8a8a8a"/><rect x="974.5" y="338.5" width="2.2" height="3.5" fill="#8a8a8a"/><rect x="1004.6" y="338.5" width="2.2" height="3.5" fill="#8a8a8a"/><rect x="1034.7" y="338.5" width="2.2" height="3.5" fill="#8a8a8a"/><rect x="1064.8" y="338.5" width="2.2" height="3.5" fill="#8a8a8a"/><rect x="1094.8" y="338.5" width="2.2" height="3.5" fill="#8a8a8a"/><rect x="1124.9" y="338.5" width="2.2" height="3.5" fill="#8a8a8a"/><rect x="1155.0" y="338.5" width="2.2" height="3.5" fill="#8a8a8a"/><rect x="1185.0" y="338.5" width="2.2" height="3.5" fill="#8a8a8a"/><path d="M378.5 370.0 h4 M380.0 364.0 h1 M380.0 375.9 h1 M378.5 393.8 h4 M380.0 387.9 h1 M380.0 399.8 h1 M378.5 417.7 h4 M380.0 411.7 h1 M380.0 423.6 h1 M378.5 441.5 h4 M380.0 435.6 h1 M380.0 447.5 h1 M378.5 465.4 h4 M380.0 459.4 h1 M380.0 471.3 h1 M378.5 489.2 h4 M380.0 483.3 h1 M380.0 495.2 h1 M378.5 513.1 h4 M380.0 507.1 h1 M380.0 519.0 h1 M378.5 536.9 h4 M380.0 531.0 h1 M380.0 542.9 h1 M378.5 560.8 h4 M380.0 554.8 h1 M380.0 566.7 h1 M378.5 584.6 h4 M380.0 578.7 h1 M380.0 590.6 h1 M378.5 608.5 h4 M380.0 602.5 h1 M380.0 614.4 h1 M378.5 632.3 h4 M380.0 626.4 h1 M380.0 638.3 h1 M378.5 656.2 h4 M380.0 650.2 h1 M380.0 662.1 h1 M378.5 680.0 h4 M380.0 674.1 h1 M380.0 686.0 h1 M378.5 703.9 h4 M380.0 697.9 h1 M380.0 709.8 h1 M378.5 727.7 h4 M380.0 721.8 h1 M380.0 733.7 h1 M378.5 751.6 h4 M380.0 745.6 h1 M380.0 757.5 h1" stroke="#777" stroke-width="1"/></svg>
<div class="t" style="left:510.3px;width:20px;text-align:center;top:327px;font-size:11px;color:#555">4</div>
<div class="t" style="left:533.9px;width:20px;text-align:center;top:327px;font-size:11px;color:#555">3</div>
<div class="t" style="left:557.5px;width:20px;text-align:center;top:327px;font-size:11px;color:#555">2</div>
<div class="t" style="left:581.1px;width:20px;text-align:center;top:327px;font-size:11px;color:#555">1</div>
<div class="t" style="left:628.3px;width:20px;text-align:center;top:327px;font-size:11px;color:#555">1</div>
<div class="t" style="left:651.9px;width:20px;text-align:center;top:327px;font-size:11px;color:#555">2</div>
<div class="t" style="left:675.5px;width:20px;text-align:center;top:327px;font-size:11px;color:#555">3</div>
<div class="t" style="left:699.1px;width:20px;text-align:center;top:327px;font-size:11px;color:#555">4</div>
<div class="t" style="left:722.7px;width:20px;text-align:center;top:327px;font-size:11px;color:#555">5</div>
<div class="t" style="left:746.3px;width:20px;text-align:center;top:327px;font-size:11px;color:#555">6</div>
<div class="t" style="left:769.9px;width:20px;text-align:center;top:327px;font-size:11px;color:#555">7</div>
<div class="t" style="left:793.5px;width:20px;text-align:center;top:327px;font-size:11px;color:#555">8</div>
<div class="t" style="left:817.1px;width:20px;text-align:center;top:327px;font-size:11px;color:#555">9</div>
<div class="t" style="left:840.7px;width:20px;text-align:center;top:327px;font-size:11px;color:#555">10</div>
<div class="t" style="left:864.3px;width:20px;text-align:center;top:327px;font-size:11px;color:#555">11</div>
<div class="t" style="left:887.9px;width:20px;text-align:center;top:327px;font-size:11px;color:#555">12</div>
<div class="t" style="left:911.5px;width:20px;text-align:center;top:327px;font-size:11px;color:#555">13</div>
<div class="t" style="left:935.1px;width:20px;text-align:center;top:327px;font-size:11px;color:#555">14</div>
<div class="t" style="left:958.7px;width:20px;text-align:center;top:327px;font-size:11px;color:#555">15</div>
<div class="t" style="left:982.3px;width:20px;text-align:center;top:327px;font-size:11px;color:#555">16</div>
<div class="t" style="left:1005.9px;width:20px;text-align:center;top:327px;font-size:11px;color:#555">17</div>
<div class="t" style="left:1029.5px;width:20px;text-align:center;top:327px;font-size:11px;color:#555">18</div>
<div class="t" style="left:1053.1px;width:20px;text-align:center;top:327px;font-size:11px;color:#555">19</div>
<div class="t" style="left:1076.7px;width:20px;text-align:center;top:327px;font-size:11px;color:#555">20</div>
<div class="t" style="left:1100.3px;width:20px;text-align:center;top:327px;font-size:11px;color:#555">21</div>
<div class="t" style="left:1123.9px;width:20px;text-align:center;top:327px;font-size:11px;color:#555">22</div>
<div class="t" style="left:1147.5px;width:20px;text-align:center;top:327px;font-size:11px;color:#555">23</div>
<div class="t" style="left:1171.1px;width:20px;text-align:center;top:327px;font-size:11px;color:#555">24</div>
<div class="t" style="left:1194.7px;width:20px;text-align:center;top:327px;font-size:11px;color:#555">25</div>
<div class="t" style="left:1218.3px;width:20px;text-align:center;top:327px;font-size:11px;color:#555">26</div>
<div class="t" style="left:1241.9px;width:20px;text-align:center;top:327px;font-size:11px;color:#555">27</div>
<div class="t" style="left:1265.5px;width:20px;text-align:center;top:327px;font-size:11px;color:#555">28</div>
<div class="t" style="left:370.5px;width:20px;text-align:center;top:353.0px;font-size:10px;color:#555;transform:rotate(90deg)">7</div>
<div class="t" style="left:370.5px;width:20px;text-align:center;top:376.9px;font-size:10px;color:#555;transform:rotate(90deg)">6</div>
<div class="t" style="left:370.5px;width:20px;text-align:center;top:400.8px;font-size:10px;color:#555;transform:rotate(90deg)">5</div>
<div class="t" style="left:370.5px;width:20px;text-align:center;top:424.6px;font-size:10px;color:#555;transform:rotate(90deg)">4</div>
<div class="t" style="left:370.5px;width:20px;text-align:center;top:448.4px;font-size:10px;color:#555;transform:rotate(90deg)">3</div>
<div class="t" style="left:370.5px;width:20px;text-align:center;top:472.3px;font-size:10px;color:#555;transform:rotate(90deg)">2</div>
<div class="t" style="left:370.5px;width:20px;text-align:center;top:496.1px;font-size:10px;color:#555;transform:rotate(90deg)">1</div>
<div class="t" style="left:370.5px;width:20px;text-align:center;top:543.9px;font-size:10px;color:#555;transform:rotate(90deg)">1</div>
<div class="t" style="left:370.5px;width:20px;text-align:center;top:567.7px;font-size:10px;color:#555;transform:rotate(90deg)">2</div>
<div class="t" style="left:370.5px;width:20px;text-align:center;top:591.5px;font-size:10px;color:#555;transform:rotate(90deg)">3</div>
<div class="t" style="left:370.5px;width:20px;text-align:center;top:615.4px;font-size:10px;color:#555;transform:rotate(90deg)">4</div>
<div class="t" style="left:370.5px;width:20px;text-align:center;top:639.2px;font-size:10px;color:#555;transform:rotate(90deg)">5</div>
<div class="t" style="left:370.5px;width:20px;text-align:center;top:663.1px;font-size:10px;color:#555;transform:rotate(90deg)">6</div>
<div class="t" style="left:370.5px;width:20px;text-align:center;top:687.0px;font-size:10px;color:#555;transform:rotate(90deg)">7</div>
<div class="t" style="left:370.5px;width:20px;text-align:center;top:710.8px;font-size:10px;color:#555;transform:rotate(90deg)">8</div>
<div class="t" style="left:370.5px;width:20px;text-align:center;top:734.6px;font-size:10px;color:#555;transform:rotate(90deg)">9</div>
<div class="t" style="left:370.5px;width:20px;text-align:center;top:758.5px;font-size:10px;color:#555;transform:rotate(90deg)">10</div>
<div class="a" style="left:204px;top:321px;width:127px;height:11px;background:linear-gradient(180deg,#f0dca8,#e9c68e);border:1px solid #f4e8dc;border-top:none"></div>
<div class="a" style="left:211px;top:321px;width:113px;height:5px;background:#fbfbea;border-bottom:1.5px solid #a8a870"></div>
<div class="a" style="left:204px;top:350px;width:127px;height:73px;background:linear-gradient(180deg,#e9bf80,#f0d49c 40%,#e8c58c);border:1px solid #f4e8dc"></div><div class="a" style="left:211px;top:357px;width:113px;height:59px;background:#fbfbf6;border:1px solid #c8c690"></div><div class="a" style="left:204px;top:383px;width:8px;height:6px;background:#3e2e24"></div><div class="a" style="left:322px;top:383px;width:8px;height:6px;background:#3e2e24"></div>
<div class="t" style="left:182px;top:349.5px;font-size:12.5px;color:#555">17</div>
<div class="t" style="left:219px;top:365px;font-family:'Liberation Serif',serif;font-size:19.2px;color:#3a3a3a;font-weight:bold;font-style:normal;transform:scale(0.25);transform-origin:0 0">Apa saja?</div>
<div class="a" style="left:220px;top:376px;width:96px;height:1px;background:#a8b070"></div>
<div class="t" style="left:226px;top:378.1px;font-family:'Liberation Serif',serif;font-size:17.6px;color:#2e2e2e;font-weight:normal;font-style:normal;transform:scale(0.25);transform-origin:0 0">Ujian adalah/ [mid-term], TKA, UTS, UAS</div>
<div class="t" style="left:226px;top:384.1px;font-family:'Liberation Serif',serif;font-size:17.6px;color:#2e2e2e;font-weight:normal;font-style:normal;transform:scale(0.25);transform-origin:0 0">dan berbagai bentuk penilaian sumatif</div>
<div class="t" style="left:226px;top:390.1px;font-family:'Liberation Serif',serif;font-size:17.6px;color:#2e2e2e;font-weight:normal;font-style:normal;transform:scale(0.25);transform-origin:0 0">merupakan <i>assessment of</i></div>
<div class="t" style="left:226px;top:396.1px;font-family:'Liberation Serif',serif;font-size:17.6px;color:#2e2e2e;font-weight:normal;font-style:normal;transform:scale(0.25);transform-origin:0 0"><i>learning</i> (penilaian hasil belajar).</div>
<div class="a" style="left:204px;top:439px;width:127px;height:73px;background:linear-gradient(180deg,#e9bf80,#f0d49c 40%,#e8c58c);border:1px solid #f4e8dc"></div><div class="a" style="left:211px;top:446px;width:113px;height:59px;background:#fbfbf6;border:1px solid #c8c690"></div><div class="a" style="left:204px;top:472px;width:8px;height:6px;background:#3e2e24"></div><div class="a" style="left:322px;top:472px;width:8px;height:6px;background:#3e2e24"></div>
<div class="t" style="left:182px;top:438.5px;font-size:12.5px;color:#555">18</div>
<div class="t" style="left:219px;top:455.5px;font-family:'Liberation Serif',serif;font-size:19.2px;color:#3a3a3a;font-weight:bold;font-style:normal;transform:scale(0.25);transform-origin:0 0">Apa peran guru selama AaL?</div>
<div class="a" style="left:220px;top:466px;width:96px;height:1px;background:#a8b070"></div>
<div class="t" style="left:230px;top:466.6px;font-family:'Liberation Serif',serif;font-size:15.8px;color:#2e2e2e;font-weight:normal;font-style:normal;transform:scale(0.25);transform-origin:0 0">• Guru bisa membimbing dan memberi contoh</div>
<div class="t" style="left:232px;top:470.51000000000005px;font-family:'Liberation Serif',serif;font-size:15.8px;color:#2e2e2e;font-weight:normal;font-style:normal;transform:scale(0.25);transform-origin:0 0">yang baik untuk mengukur hasil belajar siswa.</div>
<div class="t" style="left:230px;top:476.26000000000005px;font-family:'Liberation Serif',serif;font-size:15.8px;color:#2e2e2e;font-weight:normal;font-style:normal;transform:scale(0.25);transform-origin:0 0">• Guru memfasilitasi siswa untuk melakukan</div>
<div class="t" style="left:232px;top:480.17px;font-family:'Liberation Serif',serif;font-size:15.8px;color:#2e2e2e;font-weight:normal;font-style:normal;transform:scale(0.25);transform-origin:0 0">perbaikan proses belajar secara mandiri,</div>
<div class="t" style="left:232px;top:484.08000000000004px;font-family:'Liberation Serif',serif;font-size:15.8px;color:#2e2e2e;font-weight:normal;font-style:normal;transform:scale(0.25);transform-origin:0 0">berdasarkan hasil yang diperoleh dari berbagai</div>
<div class="t" style="left:232px;top:487.99px;font-family:'Liberation Serif',serif;font-size:15.8px;color:#2e2e2e;font-weight:normal;font-style:normal;transform:scale(0.25);transform-origin:0 0">kesimpulan.</div>
<div class="a" style="left:204px;top:530px;width:127px;height:73px;background:linear-gradient(180deg,#e9bf80,#f0d49c 40%,#e8c58c);border:1px solid #f4e8dc"></div><div class="a" style="left:211px;top:537px;width:113px;height:59px;background:#fbfbf6;border:1px solid #c8c690"></div><div class="a" style="left:204px;top:563px;width:8px;height:6px;background:#3e2e24"></div><div class="a" style="left:322px;top:563px;width:8px;height:6px;background:#3e2e24"></div>
<div class="t" style="left:182px;top:529.5px;font-size:12.5px;color:#555">19</div>
<div class="t" style="left:219px;top:544px;font-family:'Liberation Serif',serif;font-size:19.2px;color:#3a3a3a;font-weight:bold;font-style:normal;transform:scale(0.25);transform-origin:0 0">2. Assessment for Learning (AfL)</div>
<div class="a" style="left:220px;top:555px;width:96px;height:1px;background:#a8b070"></div>
<div class="t" style="left:222px;top:557.6px;font-family:'Liberation Serif',serif;font-size:17.2px;color:#222;font-weight:bold;font-style:normal;transform:scale(0.25);transform-origin:0 0"><i>Assessment for learning</i> dilakukan selama</div>
<div class="t" style="left:222px;top:563.3000000000001px;font-family:'Liberation Serif',serif;font-size:17.2px;color:#222;font-weight:bold;font-style:normal;transform:scale(0.25);transform-origin:0 0">proses pembelajaran berlangsung dan</div>
<div class="t" style="left:222px;top:569.0px;font-family:'Liberation Serif',serif;font-size:17.2px;color:#222;font-weight:bold;font-style:normal;transform:scale(0.25);transform-origin:0 0">hasilnya digunakan sebagai dasar untuk</div>
<div class="t" style="left:222px;top:574.7px;font-family:'Liberation Serif',serif;font-size:17.2px;color:#222;font-weight:bold;font-style:normal;transform:scale(0.25);transform-origin:0 0">melakukan perbaikan proses belajar mengajar.</div>
<div class="a" style="left:204px;top:619px;width:127px;height:73px;background:linear-gradient(180deg,#e9bf80,#f0d49c 40%,#e8c58c);border:1px solid #f4e8dc"></div><div class="a" style="left:211px;top:626px;width:113px;height:59px;background:#fbfbf6;border:1px solid #c8c690"></div><div class="a" style="left:204px;top:652px;width:8px;height:6px;background:#3e2e24"></div><div class="a" style="left:322px;top:652px;width:8px;height:6px;background:#3e2e24"></div>
<div class="t" style="left:182px;top:618.5px;font-size:12.5px;color:#555">20</div>
<div class="t" style="left:219px;top:634px;font-family:'Liberation Serif',serif;font-size:19.2px;color:#3a3a3a;font-weight:bold;font-style:normal;transform:scale(0.25);transform-origin:0 0">Manfaat <i>Assessment for Learning</i></div>
<div class="a" style="left:220px;top:645px;width:96px;height:1px;background:#a8b070"></div>
<div class="t" style="left:228px;top:646.6px;font-family:'Liberation Serif',serif;font-size:15.6px;color:#2e2e2e;font-weight:normal;font-style:normal;transform:scale(0.25);transform-origin:0 0">• <i>Assessment for learning</i> dilakukan oleh guru</div>
<div class="t" style="left:230px;top:650.6px;font-family:'Liberation Serif',serif;font-size:15.6px;color:#2e2e2e;font-weight:normal;font-style:normal;transform:scale(0.25);transform-origin:0 0">untuk memantau progres belajar, refleksi</div>
<div class="t" style="left:230px;top:654.6px;font-family:'Liberation Serif',serif;font-size:15.6px;color:#2e2e2e;font-weight:normal;font-style:normal;transform:scale(0.25);transform-origin:0 0">proses belajar siswa dalam memenuhi tuntutan, dan</div>
<div class="t" style="left:230px;top:658.6px;font-family:'Liberation Serif',serif;font-size:15.6px;color:#2e2e2e;font-weight:normal;font-style:normal;transform:scale(0.25);transform-origin:0 0">menemukan kelemahan belajar.</div>
<div class="t" style="left:228px;top:666.6px;font-family:'Liberation Serif',serif;font-size:15.6px;color:#2e2e2e;font-weight:normal;font-style:normal;transform:scale(0.25);transform-origin:0 0">• <i>Assessment for learning</i> juga dimanfaatkan</div>
<div class="t" style="left:230px;top:670.6px;font-family:'Liberation Serif',serif;font-size:15.6px;color:#2e2e2e;font-weight:normal;font-style:normal;transform:scale(0.25);transform-origin:0 0">oleh guru untuk meningkatkan kualitas</div>
<div class="t" style="left:230px;top:674.6px;font-family:'Liberation Serif',serif;font-size:15.6px;color:#2e2e2e;font-weight:normal;font-style:normal;transform:scale(0.25);transform-origin:0 0">pembelajaran selanjutnya.</div>
<div class="a" style="left:201px;top:707px;width:133px;height:60px;border:2px solid #e8704f;border-bottom:none"></div><div class="a" style="left:204px;top:710px;width:127px;height:73px;background:linear-gradient(180deg,#e9bf80,#f0d49c 40%,#e8c58c);border:1px solid #f4e8dc"></div><div class="a" style="left:211px;top:717px;width:113px;height:59px;background:#fbfbf6;border:1px solid #c8c690"></div><div class="a" style="left:204px;top:743px;width:8px;height:6px;background:#3e2e24"></div><div class="a" style="left:322px;top:743px;width:8px;height:6px;background:#3e2e24"></div>
<div class="t" style="left:182px;top:709.5px;font-size:12.5px;color:#d0542f">21</div>
<div class="t" style="left:219px;top:724.8px;font-family:'Liberation Serif',serif;font-size:19.2px;color:#3a3a3a;font-weight:bold;font-style:normal;transform:scale(0.25);transform-origin:0 0">Apa saja?</div>
<div class="a" style="left:220px;top:735.7px;width:96px;height:1px;background:#a8b070"></div>
<div class="t" style="left:222px;top:737.2px;font-family:'Liberation Serif',serif;font-size:17.2px;color:#2e2e2e;font-weight:normal;font-style:normal;transform:scale(0.25);transform-origin:0 0">Tugas, presentasi, proyek, ulangan harian,</div>
<div class="t" style="left:222px;top:742.0px;font-family:'Liberation Serif',serif;font-size:17.2px;color:#2e2e2e;font-weight:normal;font-style:normal;transform:scale(0.25);transform-origin:0 0">termasuk kuis merupakan contoh-</div>
<div class="t" style="left:222px;top:746.8000000000001px;font-family:'Liberation Serif',serif;font-size:17.2px;color:#2e2e2e;font-weight:normal;font-style:normal;transform:scale(0.25);transform-origin:0 0">contoh <b><i>assessment for learning</i></b> (penilaian untuk</div>
<div class="t" style="left:222px;top:751.6px;font-family:'Liberation Serif',serif;font-size:17.2px;color:#2e2e2e;font-weight:normal;font-style:normal;transform:scale(0.25);transform-origin:0 0">proses belajar). Teknik penilaian yang digunakan</div>
<div class="t" style="left:222px;top:756.4000000000001px;font-family:'Liberation Serif',serif;font-size:17.2px;color:#2e2e2e;font-weight:normal;font-style:normal;transform:scale(0.25);transform-origin:0 0">adalah <b>observasi</b> yang dipandu dengan rubrik</div>
<div class="t" style="left:222px;top:761.2px;font-family:'Liberation Serif',serif;font-size:17.2px;color:#2e2e2e;font-weight:normal;font-style:normal;transform:scale(0.25);transform-origin:0 0">penilain.</div>
<div class="a" style="left:499px;top:355px;width:800px;height:412px;background:linear-gradient(180deg,#e5b27c 0px,#ecc48e 10px,#f0d39c 18px,#eccb92 28px,#e9c38a 60px,#ebc68d 120px,#e6bd84 160px,#ecc98f 220px,#e9c389 412px)"></div>
<div class="a" style="left:531px;top:387px;width:736px;height:380px;background:#f9f9f9"></div>
<div class="a" style="left:540px;top:396px;width:720px;height:371px;border:1px solid #b8b87a;border-bottom:none"></div>
<div class="a" style="left:499px;top:562px;width:50px;height:40px;background:#3d3029"></div>
<div class="a" style="left:1250px;top:562px;width:50px;height:40px;background:#3d3029"></div>
<div class="a" style="left:591px;top:514.5px;width:619px;height:1px;background:#a3ad6c"></div>
<div class="t" style="left:592px;top:445.94px;font-size:34.7px;font-weight:bold;color:#2e2e2e;font-family:'Liberation Serif',serif;transform:scaleX(0.969);transform-origin:0 0">Apa saja?</div>
<svg style="left:0;top:0" width="1600" height="900"><rect x="606.5" y="523.5" width="607.5" height="217.5" fill="none" stroke="#a0a0a0" stroke-width="1" stroke-dasharray="1.5 1"/><path d="M910.5 500 v23" stroke="#999"/><circle cx="606.5" cy="523.5" r="4.2" fill="#fff" stroke="#8a8a8a" stroke-width="1.3"/><circle cx="910.5" cy="523.5" r="4.2" fill="#fff" stroke="#8a8a8a" stroke-width="1.3"/><circle cx="1214" cy="523.5" r="4.2" fill="#fff" stroke="#8a8a8a" stroke-width="1.3"/><circle cx="606.5" cy="632.2" r="4.2" fill="#fff" stroke="#8a8a8a" stroke-width="1.3"/><circle cx="1214" cy="632.2" r="4.2" fill="#fff" stroke="#8a8a8a" stroke-width="1.3"/><circle cx="606.5" cy="741" r="4.2" fill="#fff" stroke="#8a8a8a" stroke-width="1.3"/><circle cx="910.5" cy="741" r="4.2" fill="#fff" stroke="#8a8a8a" stroke-width="1.3"/><circle cx="1214" cy="741" r="4.2" fill="#fff" stroke="#8a8a8a" stroke-width="1.3"/><path d="M917 496 A7.5 7.5 0 1 1 916 486.5" fill="none" stroke="#8a8a8a" stroke-width="4"/><path d="M917 496 A7.5 7.5 0 1 1 916 486.5" fill="none" stroke="#f9f9f9" stroke-width="1.3"/><path d="M913 491 l11 0.5 l-6 6z" fill="#f9f9f9" stroke="#8a8a8a" stroke-width="1.3"/><rect x="576.5" y="723.5" width="17" height="17" fill="#fff" stroke="#c8c8c8"/><path d="M580 732 h10 M585 724.5 v5 M583 727.5 l2 2 l2 -2 M585 739.5 v-5 M583 736.5 l2 -2 l2 2" stroke="#4a78d0" fill="none"/><path d="M918 554 L920 553 L922 554.5 L924 553 L926 554.5 L928 553 L930 554.5 L932 553 L934 554.5 L936 553 L938 554.5 L940 553 L942 554.5 L944 553 L946 554.5 L948 553 L950 554.5 L952 553 L954 554.5 L956 553 L958 554.5 L960 553 L962 554.5 L964 553 L966 554.5 L968 553 L970 554.5 L972 553 L974 554.5 L976 553 L978 554.5 L980 553 L982 554.5 L984 553 L986 554.5 L988 553 L990 554.5 L992 553 L994 554.5 L996 553 L998 554.5 L1000 553" stroke="#e04040" stroke-width="0.8" fill="none"/><path d="M1010 554 L1012 553 L1014 554.5 L1016 553 L1018 554.5 L1020 553 L1022 554.5 L1024 553 L1026 554.5 L1028 553 L1030 554.5 L1032 553 L1034 554.5 L1036 553 L1038 554.5 L1040 553 L1042 554.5 L1044 553 L1046 554.5 L1048 553 L1050 554.5 L1052 553 L1054 554.5 L1056 553 L1058 554.5 L1060 553 L1062 554.5 L1064 553 L1066 554.5 L1068 553 L1070 554.5 L1072 553 L1074 554.5 L1076 553 L1078 554.5 L1080 553 L1082 554.5 L1084 553 L1086 554.5 L1088 553 L1090 554.5 L1092 553 L1094 554.5" stroke="#e04040" stroke-width="0.8" fill="none"/><path d="M613 585 L615 584 L617 585.5 L619 584 L621 585.5 L623 584 L625 585.5 L627 584 L629 585.5 L631 584 L633 585.5 L635 584 L637 585.5 L639 584 L641 585.5 L643 584 L645 585.5 L647 584 L649 585.5 L651 584 L653 585.5 L655 584 L657 585.5 L659 584 L661 585.5 L663 584 L665 585.5 L667 584 L669 585.5 L671 584 L673 585.5 L675 584 L677 585.5 L679 584 L681 585.5 L683 584 L685 585.5 L687 584 L689 585.5 L691 584 L693 585.5 L695 584 L697 585.5 L699 584 L701 585.5 L703 584 L705 585.5" stroke="#e04040" stroke-width="0.8" fill="none"/><path d="M712.5 687 v32" stroke="#333" stroke-width="1"/><path d="M806 684.5 h9 M806 699.5 h9 M810.5 684.5 v15" stroke="#3a1030" stroke-width="2"/></svg>
<div class="t" style="left:613.5px;top:527.47px;font-family:'Liberation Serif',serif;font-size:27.5px;color:#444;font-weight:normal;font-style:normal;transform:scaleX(1.0356);transform-origin:0 0">Tugas, presentasi, proyek, ulangan harian,</div>
<div class="t" style="left:613.5px;top:559.57px;font-family:'Liberation Serif',serif;font-size:27.5px;color:#444;font-weight:normal;font-style:normal;transform:scaleX(1.0617);transform-origin:0 0">termasuk kuis merupakan contoh-</div>
<div class="t" style="left:613.5px;top:591.67px;font-family:'Liberation Serif',serif;font-size:27.5px;color:#444;font-weight:normal;font-style:normal;transform:scaleX(1.0888);transform-origin:0 0">contoh</div>
<div class="t" style="left:706px;top:591.67px;font-family:'Liberation Serif',serif;font-size:27.5px;color:#444;font-weight:bold;font-style:italic;transform:scaleX(1.1096);transform-origin:0 0">assessment for learning</div>
<div class="t" style="left:1012px;top:591.67px;font-family:'Liberation Serif',serif;font-size:27.5px;color:#444;font-weight:normal;font-style:normal;transform:scaleX(1.0292);transform-origin:0 0">(penilaian untuk</div>
<div class="t" style="left:613.5px;top:623.77px;font-family:'Liberation Serif',serif;font-size:27.5px;color:#444;font-weight:normal;font-style:normal;transform:scaleX(1.0329);transform-origin:0 0">proses belajar). Teknik penilaian yang digunakan</div>
<div class="t" style="left:613.5px;top:655.87px;font-family:'Liberation Serif',serif;font-size:27.5px;color:#444;font-weight:normal;font-style:normal;transform:scaleX(1.0105);transform-origin:0 0">adalah</div>
<div class="t" style="left:695.6px;top:655.87px;font-family:'Liberation Serif',serif;font-size:27.5px;color:#444;font-weight:bold;font-style:normal;transform:scaleX(1.0582);transform-origin:0 0">observasi</div>
<div class="t" style="left:818px;top:655.87px;font-family:'Liberation Serif',serif;font-size:27.5px;color:#444;font-weight:normal;font-style:normal;transform:scaleX(1.0627);transform-origin:0 0">yang dipandu dengan rubrik</div>
<div class="t" style="left:613.5px;top:687.97px;font-family:'Liberation Serif',serif;font-size:27.5px;color:#444;font-weight:normal;font-style:normal;transform:scaleX(1.0110);transform-origin:0 0">penilain.</div><svg style="left:0;top:0" width="100" height="800"><circle cx="45" cy="725" r="20" fill="#2a2c2f"/><g transform="rotate(45 45.5 724)" fill="none" stroke="#3ddc84" stroke-width="1.5" stroke-linejoin="round"><path d="M42 713 h7 v17 l-3.5 4 l-3.5 -4z M42 717.5 h7"/></g><path d="M36.5 734.5 h17.5" stroke="#3ddc84" stroke-width="1.6"/></svg>
<!-- ZOOM TOOLBAR -->
<div class="a" style="left:0;top:767px;width:1600px;height:73px;background:#000"></div>
<div class="t" style="left:-6px;width:141px;text-align:center;top:817.1px;font-size:15.2px;font-weight:normal;-webkit-text-stroke:0.45px #f2f2f2;color:#f2f2f2;letter-spacing:0.15px">Audio</div>
<div class="t" style="left:111px;width:140px;text-align:center;top:817.1px;font-size:15.2px;font-weight:normal;-webkit-text-stroke:0.45px #f2f2f2;color:#f2f2f2;letter-spacing:0.15px">Video</div>
<div class="t" style="left:445px;width:180.39999999999998px;text-align:center;top:817.1px;font-size:15.2px;font-weight:normal;-webkit-text-stroke:0.45px #f2f2f2;color:#f2f2f2;letter-spacing:0.15px">Participants</div>
<div class="t" style="left:607.5px;width:131.0px;text-align:center;top:817.1px;font-size:15.2px;font-weight:normal;-webkit-text-stroke:0.45px #f2f2f2;color:#f2f2f2;letter-spacing:0.15px">Chat</div>
<div class="t" style="left:710px;width:136.5px;text-align:center;top:817.1px;font-size:15.2px;font-weight:normal;-webkit-text-stroke:0.45px #f2f2f2;color:#f2f2f2;letter-spacing:0.15px">React</div>
<div class="t" style="left:789px;width:198.5px;text-align:center;top:817.1px;font-size:15.2px;font-weight:normal;-webkit-text-stroke:0.45px #f2f2f2;color:#f2f2f2;letter-spacing:0.15px">AI Companion</div>
<div class="t" style="left:939px;width:138.5px;text-align:center;top:817.1px;font-size:15.2px;font-weight:normal;-webkit-text-stroke:0.45px #f2f2f2;color:#f2f2f2;letter-spacing:0.15px">Share</div>
<div class="t" style="left:1052.5px;width:135.0px;text-align:center;top:817.1px;font-size:15.2px;font-weight:normal;-webkit-text-stroke:0.45px #f2f2f2;color:#f2f2f2;letter-spacing:0.15px">Apps</div>
<div class="t" style="left:1155px;width:137.5px;text-align:center;top:817.1px;font-size:15.2px;font-weight:normal;-webkit-text-stroke:0.45px #f2f2f2;color:#f2f2f2;letter-spacing:0.15px">More</div>
<div class="t" style="left:1470px;width:139px;text-align:center;top:817.1px;font-size:15.2px;font-weight:normal;-webkit-text-stroke:0.45px #f2f2f2;color:#f2f2f2;letter-spacing:0.15px">Leave</div>
<div class="t" style="left:555.5px;top:788px;font-size:13.5px;font-weight:bold;color:#b4b4b4;letter-spacing:-0.3px">118</div>
<svg style="left:0;top:0" width="1600" height="900">
 <g fill="none" stroke="#f2f2f2" stroke-width="2" stroke-linecap="round" stroke-linejoin="round">
  <rect x="59" y="781" width="10" height="17" rx="5"/>
  <path d="M54 792 q0 10 10 10 q10 0 10 -10 M64 802 v6 M58.5 808.5 h11"/>
  <path d="M167 786 h18 q3 0 3 3 v14 q0 3 -3 3 h-15 q-3 0 -3 -3z"/><path d="M188 794 l8 -5 v14 l-8 -5"/>
  <path d="M101 797.5 l4.5 -4.5 l4.5 4.5 M222.5 797.5 l4.5 -4.5 l4.5 4.5 M597.5 797.5 l4.5 -4.5 l4.5 4.5 M709.5 797.5 l4.5 -4.5 l4.5 4.5 M809.5 797.5 l4.5 -4.5 l4.5 4.5" stroke-width="2.2"/>
  <circle cx="531" cy="791" r="4.8"/><path d="M524 806 v-3 q0 -6 7 -6 q7 0 7 6 v3z"/>
  <circle cx="540.5" cy="794" r="3.6"/><path d="M541 806 h5 v-2.5 q0 -5 -5.5 -5"/>
  <path d="M666 783.5 q0 -1.5 2 -1.5 h12 q6 0 6 6 v6 q0 5 -4 6"/>
  <path d="M665 787.5 h10 q6 0 6 6 v5 q0 6 -6 6 h-6 l-5 4 l0.5 -4.5 q-5.5 -1 -5.5 -6 v-5 q0 -5.5 6 -5.5z"/>
  <path transform="rotate(-16 779 795)" d="M779 806 q-15 -9 -15 -16 q0 -6.5 7 -6.5 q5 0 8 5 q3 -5 8 -5 q7 0 7 6.5 q0 7 -15 16z"/>
  <circle cx="1224" cy="794.8" r="14"/>
  <path d="M1108 797 q0 -2 0 -2 M1107 793 v-6 q0 -4 4 -4 h6 M1133 797 v6 q0 4 -4 4 h-6"/>
  <circle cx="1128.5" cy="788" r="4.5"/><circle cx="1112" cy="802.5" r="4.5"/>
 </g>
 <path d="M50 808 L79 781 M166 808 L195 781" stroke="#e8185a" stroke-width="3" stroke-linecap="round"/>
 <path d="M667 796 h.1 M671 796 h.1 M675 796 h.1" stroke="#f2f2f2" stroke-width="2.4" stroke-linecap="round"/>
 <path d="M1218 795 h.1 M1224 795 h.1 M1230 795 h.1" stroke="#f2f2f2" stroke-width="3" stroke-linecap="round"/>
 <defs><linearGradient id="aig" x1="0" y1="0" x2="1" y2="1"><stop offset="0" stop-color="#ffffff"/><stop offset="1" stop-color="#9fd3ef"/></linearGradient></defs>
 <path d="M886 782 q2 12 15 14 q-13 2 -15 14 q-2 -12 -15 -14 q13 -2 15 -14z" fill="url(#aig)"/>
 <path d="M897.5 779 q.8 4 4.5 4.5 q-3.7 .5 -4.5 4.5 q-.8 -4 -4.5 -4.5 q3.7 -.5 4.5 -4.5z" fill="#e8f4fb"/>
 <rect x="993" y="783" width="30" height="24" rx="3" fill="#1de58d"/>
 <path d="M1008 801 v-11 M1003.5 794 l4.5 -4.5 l4.5 4.5" stroke="#000" stroke-width="2.4" fill="none" stroke-linecap="round" stroke-linejoin="round"/>
 <path d="M1536.5 781 h18 v22.5 l-7.5 5 v-22.5 l7.5 -5" fill="none" stroke="#e8185a" stroke-width="1.8" stroke-linejoin="round"/>
 <g stroke-linecap="round" stroke-linejoin="round" fill="none">
  <path d="M1535 793 l-5 5 M1535 793 l1.5 8 l-7 7.5 M1536.5 801 l2 7.5 M1535 793 l3.5 3.5 l3.5 1" stroke="#f2f2f2" stroke-width="5"/>
  <path d="M1535 793 l-5 5 M1535 793 l1.5 8 l-7 7.5 M1536.5 801 l2 7.5 M1535 793 l3.5 3.5 l3.5 1" stroke="#000" stroke-width="1.8"/>
  <circle cx="1536.3" cy="787" r="3.6" stroke="#f2f2f2" stroke-width="1.8"/>
 </g>
</svg>
<div class="a" style="left:0;top:840px;width:1600px;height:60px;background:#dcdcdc"></div>
<div class="a" style="left:1104px;top:847px;width:29px;height:46px;border-radius:5px;background:#eeeeee;border:1px solid #e6e6e6"></div>
<svg style="left:0;top:0" width="1600" height="900">
 <defs>
  <linearGradient id="sun" x1="0" y1="0" x2="0" y2="1"><stop offset="0" stop-color="#ffb62e"/><stop offset="1" stop-color="#f07a12"/></linearGradient>
  <linearGradient id="win" x1="0" y1="0" x2="1" y2="1"><stop offset="0" stop-color="#2aa8f5"/><stop offset="1" stop-color="#0a6ad8"/></linearGradient>
 </defs>
 <circle cx="40" cy="868" r="13" fill="url(#sun)"/>
 <path d="M38 877 q0 -5 5 -5 q2 -4 6 -3 q4 0 5 4 q4 1 3 5 q-1 3 -4 3 h-12 q-3 0 -3 -4z" fill="#cfe0f2" stroke="#a7c0dc" stroke-width="0.6"/>
 <circle cx="49.5" cy="858.5" r="9.5" fill="#d92f27"/>
 <g fill="url(#win)"><rect x="468" y="861" width="9.7" height="9.7"/><rect x="479" y="861" width="9.7" height="9.7"/><rect x="468" y="872" width="9.7" height="9.7"/><rect x="479" y="872" width="9.7" height="9.7"/></g>
 <circle cx="518" cy="868.5" r="6.5" fill="none" stroke="#1a1a1a" stroke-width="2"/><path d="M523 873.5 l5 5" stroke="#1a1a1a" stroke-width="2.2"/>
 <rect x="550" y="866" width="13" height="13" fill="#1e1e1e"/><rect x="557" y="861" width="13" height="12" fill="#f5f5f5" stroke="#9a9a9a" stroke-width="0.8"/>
 <path d="M590 864 h8 l2 2 h11 v14 h-21z" fill="#f2b92a"/><rect x="590" y="868" width="21" height="12" fill="#ffd54f"/><rect x="595" y="873" width="11" height="5" fill="#2a78d6"/>
 <circle cx="639.5" cy="871" r="10" fill="#1a7ed8"/><path d="M641 861 q8 1 9 9 q0 3 -3 4 h-8 q2 -6 -4 -8 q-4 -1 -6 2 q3 -7 12 -7z" fill="#3cc87a"/><path d="M634 874 q0 -5 5 -5 q4 0 4 3 h-5 q0 3 4 4 q3 0 6 -1 q-2 4 -7 4 q-7 0 -7 -5z" fill="#d8f0fa"/>
 <rect x="675" y="862" width="15" height="17" rx="2" fill="#1a75d2"/><rect x="669" y="866" width="13" height="12" rx="1.5" fill="#0f5fb8"/><circle cx="675.5" cy="872" r="3.3" fill="none" stroke="#fff" stroke-width="1.6"/>
 <rect x="710" y="866" width="20" height="14" rx="2" fill="#6a7380"/><rect x="715" y="863" width="8" height="4" fill="#6a7380"/><circle cx="720" cy="873" r="4.5" fill="#b49af0" stroke="#3e4650" stroke-width="1.2"/>
<circle cx="760" cy="871" r="10" fill="#db3a2e"/><path d="M760 871 L751.34 876 A10 10 0 0 1 760 861z" fill="#f4c20d" transform="rotate(120 760 871)"/><path d="M760 871 L751.34 876 A10 10 0 0 1 760 861z" fill="#1da462" transform="rotate(240 760 871)"/><circle cx="760" cy="871" r="4.6" fill="#fff"/><circle cx="760" cy="871" r="3.6" fill="#4a8af4"/><circle cx="880" cy="871" r="10" fill="#db3a2e"/><path d="M880 871 L871.34 876 A10 10 0 0 1 880 861z" fill="#f4c20d" transform="rotate(120 880 871)"/><path d="M880 871 L871.34 876 A10 10 0 0 1 880 861z" fill="#1da462" transform="rotate(240 880 871)"/><circle cx="880" cy="871" r="4.6" fill="#fff"/><circle cx="880" cy="871" r="3.6" fill="#4a8af4"/><circle cx="920" cy="871" r="10" fill="#db3a2e"/><path d="M920 871 L911.34 876 A10 10 0 0 1 920 861z" fill="#f4c20d" transform="rotate(120 920 871)"/><path d="M920 871 L911.34 876 A10 10 0 0 1 920 861z" fill="#1da462" transform="rotate(240 920 871)"/><circle cx="920" cy="871" r="4.6" fill="#fff"/><circle cx="920" cy="871" r="3.6" fill="#4a8af4"/><circle cx="1080" cy="871" r="10" fill="#db3a2e"/><path d="M1080 871 L1071.34 876 A10 10 0 0 1 1080 861z" fill="#f4c20d" transform="rotate(120 1080 871)"/><path d="M1080 871 L1071.34 876 A10 10 0 0 1 1080 861z" fill="#1da462" transform="rotate(240 1080 871)"/><circle cx="1080" cy="871" r="4.6" fill="#fff"/><circle cx="1080" cy="871" r="3.6" fill="#4a8af4"/>
 <circle cx="767" cy="864" r="4" fill="#5a4038"/><circle cx="886" cy="864" r="4.5" fill="#9a6ad8"/><circle cx="926" cy="864" r="4.5" fill="#8a5a48"/><circle cx="1086" cy="864" r="4.5" fill="#2a9aa8"/>
 <circle cx="770" cy="861" r="2" fill="#3a8ee6"/><circle cx="890" cy="861" r="2" fill="#3a8ee6"/><circle cx="930" cy="861" r="2" fill="#3a8ee6"/><circle cx="1090" cy="861" r="2" fill="#3a8ee6"/>
 <rect x="797" y="862" width="14" height="18" rx="1.5" fill="#4a8ad6"/><rect x="789" y="866" width="13" height="12" rx="1.5" fill="#1d5bb8"/><text x="791" y="876" font-family="Liberation Sans" font-weight="bold" font-size="9" fill="#fff">W</text>
 <rect x="831" y="862" width="18" height="18" rx="2.5" fill="#b8100c"/><path d="M834.5 876.5 q3 -3 5 -10 q0 -3 1 -3 q1 0 0.5 3 q1 6 5 8 q-6 -1 -11.5 2z" fill="none" stroke="#fff" stroke-width="1.2"/>
 <circle cx="960" cy="871" r="10" fill="#1ed760"/><path d="M954.5 867.5 q6 -2 11.5 1 M955.5 871 q5 -1.5 9.5 1 M956.5 874.3 q4 -1 7.5 .8" stroke="#1a1a1a" stroke-width="1.6" fill="none" stroke-linecap="round"/>
 <rect x="996" y="862" width="14" height="18" rx="1.5" fill="#2a9a5a"/><rect x="989" y="866" width="13" height="12" rx="1.5" fill="#107c41"/><text x="992" y="876" font-family="Liberation Sans" font-weight="bold" font-size="9" fill="#fff">X</text>
 <rect x="1032" y="861" width="16" height="18" rx="1" fill="#6ac8ee"/><path d="M1035 866 h10 M1035 869.5 h10 M1035 873 h10" stroke="#2a6ea8" stroke-width="1.3"/><path d="M1034 861 v2 M1037 861 v2 M1040 861 v2 M1043 861 v2 M1046 861 v2" stroke="#333" stroke-width="0.8"/><rect x="1032" y="879" width="16" height="1.6" fill="#c8603a"/>
 <circle cx="1120" cy="869.5" r="10.5" fill="#0b5cff"/><text x="1111.5" y="873" font-family="Liberation Sans" font-weight="bold" font-size="9.5" fill="#fff">zm</text>
 <rect x="1113" y="890" width="14" height="3" rx="1.5" fill="#1a6ed8"/>
<circle cx="600" cy="891.5" r="1.8" fill="#7a7a7a"/><circle cx="760" cy="891.5" r="1.8" fill="#7a7a7a"/><circle cx="800" cy="891.5" r="1.8" fill="#7a7a7a"/><circle cx="840" cy="891.5" r="1.8" fill="#7a7a7a"/><circle cx="880" cy="891.5" r="1.8" fill="#7a7a7a"/><circle cx="920" cy="891.5" r="1.8" fill="#7a7a7a"/><circle cx="960" cy="891.5" r="1.8" fill="#7a7a7a"/><circle cx="1000" cy="891.5" r="1.8" fill="#7a7a7a"/><circle cx="1040" cy="891.5" r="1.8" fill="#7a7a7a"/><circle cx="1080" cy="891.5" r="1.8" fill="#7a7a7a"/>
 <path d="M1226 877 l6 -6 l6 6" fill="none" stroke="#1a1a1a" stroke-width="1.6"/>
 <path d="M1266 878 h13 q4 0 4 -4 q0 -4 -4 -4 q-1 -5 -6 -5 q-4 0 -6 4 q-4 0 -4 5 q0 4 3 4z" fill="none" stroke="#1a1a1a" stroke-width="1.5"/><path d="M1262 862 l20 18" stroke="#1a1a1a" stroke-width="1.5"/>
 <rect x="1302" y="861" width="6" height="11" rx="3" fill="none" stroke="#2a5cb8" stroke-width="1.6"/><path d="M1300 868 q0 6 5 6 q5 0 5 -6 M1305 874 v4" fill="none" stroke="#2a5cb8" stroke-width="1.4"/>
 <path d="M1312 874 l13 -7 l-4 13 l-2 -5z" fill="none" stroke="#2a5cb8" stroke-width="1.5"/>
 <path d="M1398 868 q10 -9 20 0 M1401 871.5 q7 -6 14 0 M1404.5 875 q3.5 -3 7 0" fill="none" stroke="#1a1a1a" stroke-width="1.6"/><circle cx="1408" cy="878" r="1.4" fill="#1a1a1a"/>
 <path d="M1428 868 h4 l5 -5 v16 l-5 -5 h-4z" fill="none" stroke="#1a1a1a" stroke-width="1.5"/><path d="M1440 867 q3 4 0 8 M1443 864 q5 7 0 14" fill="none" stroke="#1a1a1a" stroke-width="1.5"/>
 <rect x="1458" y="865" width="17" height="11" rx="2" fill="none" stroke="#1a1a1a" stroke-width="1.5"/><rect x="1475.5" y="868" width="2" height="5" fill="#1a1a1a"/><path d="M1465 863 l-3 7 h4 l-3 7" fill="none" stroke="#1a1a1a" stroke-width="1.4"/>
</svg>
<div class="t" style="left:44px;top:853px;font-size:11.5px;font-weight:bold;color:#fff;width:11px;text-align:center">1</div>
<div class="t" style="left:1330px;top:854.5px;font-size:14px;color:#1a1a1a;width:60px;text-align:center">ENG</div>
<div class="t" style="left:1330px;top:873.5px;font-size:14px;color:#1a1a1a;width:60px;text-align:center">INTL</div>
<div class="t" style="left:1475px;top:852.3px;font-size:14.4px;color:#1a1a1a;width:100px;text-align:right">10:05</div>
<div class="t" style="left:1475px;top:872.2px;font-size:15.1px;color:#1a1a1a;width:100px;text-align:right">14/10/2025</div></body></html>
